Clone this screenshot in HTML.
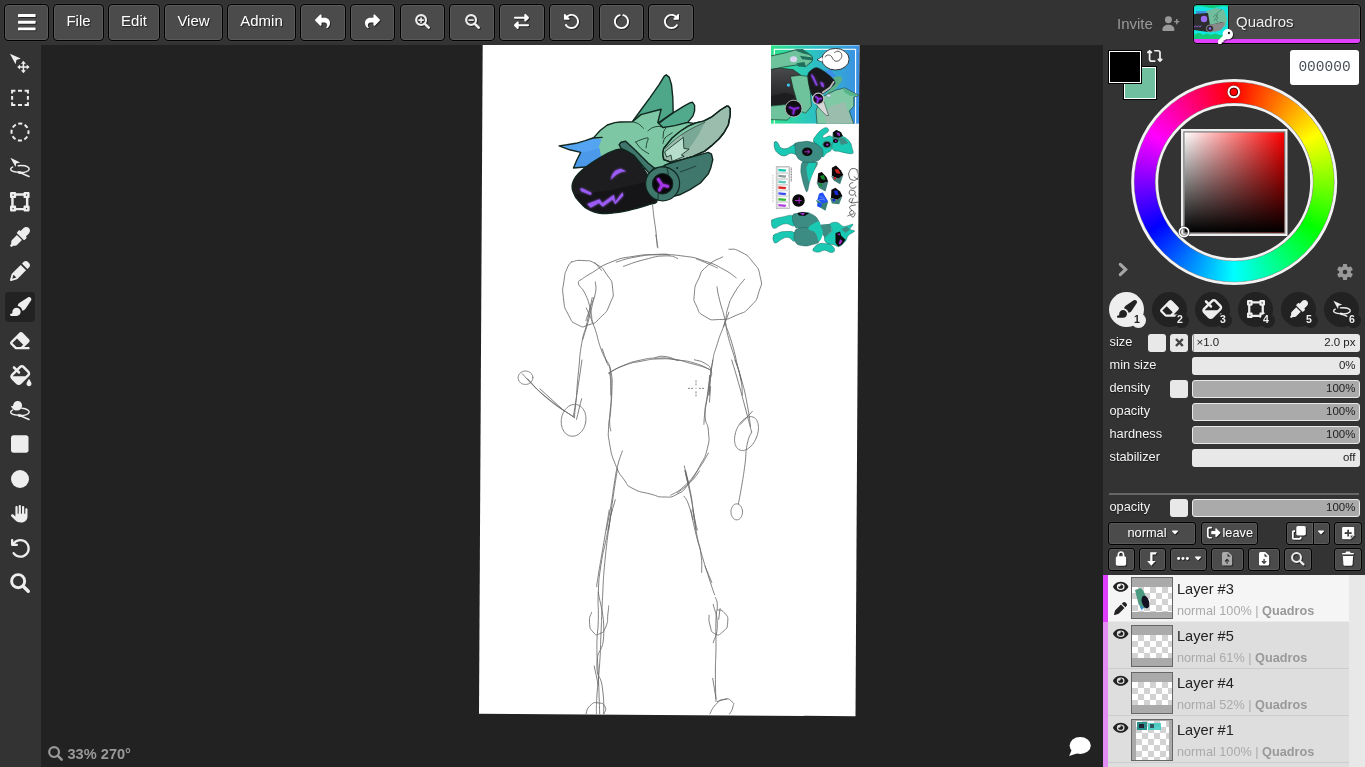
<!DOCTYPE html>
<html><head><meta charset="utf-8"><title>Magma</title>
<style>
html,body{margin:0;padding:0;}
body{width:1365px;height:767px;overflow:hidden;background:#222;position:relative;font-family:"Liberation Sans",sans-serif;font-size:15px;color:#eee;}
#root{position:absolute;left:0;top:0;width:1365px;height:767px;will-change:transform;}
.abs{position:absolute;}
#topbar{position:absolute;left:0;top:0;width:1365px;height:45px;background:#333;}
#left{position:absolute;left:0;top:45px;width:41px;height:722px;background:#333;}
#right{position:absolute;left:1103px;top:45px;width:262px;height:722px;background:#333;}
.btn{position:absolute;box-sizing:border-box;background:#4b4b4b;border:1px solid #000;box-shadow:inset 0 0 0 1px rgba(255,255,255,.08),0 0 0 1px rgba(255,255,255,.03);border-radius:4px;color:#fff;text-align:center;text-shadow:1px 1px 1px rgba(0,0,0,.55);}
.tb{top:4px;height:37px;line-height:31px;font-size:15px;}
svg{display:block;overflow:visible;fill:#eee;}
.slot{position:absolute;top:292px;width:35px;height:35px;border-radius:50%;background:#222;}
.slot.sel{background:#eee;}
.badge{position:absolute;left:22px;top:21px;width:15px;height:15px;border-radius:50%;background:inherit;font-size:10.5px;font-weight:bold;line-height:12px;text-align:center;color:#eee;text-indent:-3px;}
.slot.sel .badge{color:#222;}
.lbl{position:absolute;left:1109.5px;font-size:12.8px;line-height:18px;color:#eee;text-shadow:0 1px 1px rgba(0,0,0,.6);}
.chk{position:absolute;width:18px;height:18px;border-radius:3px;background:#e8e8e8;}
.sld{position:absolute;left:1192px;width:168px;height:18px;border-radius:3px;background:#e8e8e8;box-sizing:border-box;font-size:11.5px;line-height:17px;color:#222;text-align:right;padding-right:4.5px;}
.sld.full{background:#aaa;border:1px solid #e8e8e8;line-height:15px;padding-right:3.5px;}
.lb{position:absolute;box-sizing:border-box;background:#4b4b4b;border:1px solid #000;box-shadow:inset 0 0 0 1px rgba(255,255,255,.08),0 0 0 1px rgba(255,255,255,.03);border-radius:3px;height:22.3px;color:#fff;font-size:12.8px;line-height:19.5px;text-shadow:1px 1px 1px rgba(0,0,0,.55);}
.row{position:absolute;left:1108px;width:241px;height:47px;background:#dedede;box-sizing:border-box;border-bottom:1px solid #ccc;}
.row.act{background:#f5f5f5;border-bottom-color:#eaeaea;}
.stripe{position:absolute;left:1103px;width:5px;height:47px;background:#e38df5;}
.thumb{position:absolute;left:23px;top:2px;width:42px;height:42px;box-sizing:border-box;border:1px solid #666;background:#aaa;overflow:hidden;}
.chk8{background-color:#fff;background-image:linear-gradient(45deg,#d2d2d2 25%,transparent 25%,transparent 75%,#d2d2d2 75%),linear-gradient(45deg,#d2d2d2 25%,transparent 25%,transparent 75%,#d2d2d2 75%);background-size:12px 12px;background-position:0 0,6px 6px;}
.lname{position:absolute;left:69px;top:5px;font-size:14.6px;line-height:18px;color:#222;}
.lsub{position:absolute;left:69px;top:28px;font-size:12.7px;line-height:16px;color:#aaa;white-space:nowrap;}
.lsub b{color:#999;}

.btn svg,.lb svg{fill:#fff;filter:drop-shadow(1px 1px .5px rgba(0,0,0,.5));}
.btn svg[style*="fill:#eee"],.lb svg[style*="fill:#eee"]{fill:#fff !important;}
.lbl{color:#f4f4f4;}

</style></head>
<body><div id="root">
<div id="topbar">
  <div class="btn tb" style="left:4px;width:45px;"><svg class="abs" style="left:12.8px;top:8.6px;width:17.6px;height:16.4px" viewBox="0 0 448 416"><rect x="0" y="0" width="448" height="76" rx="16"/><rect x="0" y="170" width="448" height="76" rx="16"/><rect x="0" y="340" width="448" height="76" rx="16"/></svg></div>
  <div class="btn tb" style="left:53px;width:51px;">File</div>
  <div class="btn tb" style="left:108px;width:52px;">Edit</div>
  <div class="btn tb" style="left:164px;width:59px;">View</div>
  <div class="btn tb" style="left:227px;width:69px;">Admin</div>
  <div class="btn tb" style="left:300px;width:45.6px;"><svg style="position:absolute;left:14.3px;top:9px;width:15px;height:15px;fill:#eee;" viewBox="0 0 512 512"><path d="M204.2 18.4c12 5 19.8 16.6 19.8 29.6v80h112c97.2 0 176 78.8 176 176 0 113.3-81.5 163.9-100.2 174.1-2.5 1.4-5.3 1.9-8.1 1.9-10.9 0-19.7-8.9-19.7-19.7 0-7.5 4.3-14.4 9.8-19.5 9.4-8.8 22.2-26.4 22.2-56.7 0-53-43-96-96-96h-96v80c0 12.9-7.8 24.6-19.8 29.6s-25.7 2.2-34.9-6.9l-160-160c-12.5-12.5-12.5-32.8 0-45.3l160-160c9.2-9.2 22.9-11.9 34.9-6.9z"/></svg></div>
  <div class="btn tb" style="left:349.75px;width:45.6px;"><svg style="position:absolute;left:14.3px;top:9px;width:15px;height:15px;fill:#eee;" viewBox="0 0 512 512"><path d="M307.8 18.4C295.8 23.4 288 35 288 48v80H176C78.8 128 0 206.8 0 304c0 113.3 81.5 163.9 100.2 174.1 2.5 1.4 5.3 1.9 8.1 1.9 10.9 0 19.7-8.9 19.7-19.7 0-7.5-4.3-14.4-9.8-19.5-9.4-8.8-22.2-26.4-22.2-56.7 0-53 43-96 96-96h96v80c0 12.9 7.8 24.6 19.8 29.6s25.7 2.2 34.9-6.9l160-160c12.5-12.5 12.5-32.8 0-45.3l-160-160c-9.2-9.2-22.9-11.9-34.9-6.9z"/></svg></div>
  <div class="btn tb" style="left:399.5px;width:45.6px;"><svg class="abs" style="left:14.3px;top:9px;width:15px;height:15px" viewBox="0 0 15 15"><circle cx="6.1" cy="6.1" r="4.9" fill="none" stroke="#eee" stroke-width="2.2"/><path d="M9.9 9.9 L13.7 13.7" stroke="#eee" stroke-width="2.5" stroke-linecap="round"/><path d="M3.4 6.1 H8.8 M6.1 3.4 V8.8" stroke="#eee" stroke-width="1.6" fill="none"/></svg></div>
  <div class="btn tb" style="left:449.25px;width:45.6px;"><svg class="abs" style="left:14.3px;top:9px;width:15px;height:15px" viewBox="0 0 15 15"><circle cx="6.1" cy="6.1" r="4.9" fill="none" stroke="#eee" stroke-width="2.2"/><path d="M9.9 9.9 L13.7 13.7" stroke="#eee" stroke-width="2.5" stroke-linecap="round"/><path d="M3.4 6.1 H8.8" stroke="#eee" stroke-width="1.6" fill="none"/></svg></div>
  <div class="btn tb" style="left:499px;width:45.6px;"><svg style="position:absolute;left:14.3px;top:9px;width:15px;height:15px;fill:#eee;" viewBox="0 0 512 512"><path d="m502.6 150.6-96 96c-9.2 9.2-22.9 11.9-34.9 6.9S352 236.9 352 224v-64H32c-17.7 0-32-14.3-32-32s14.3-32 32-32h320V32c0-12.9 7.8-24.6 19.8-29.6s25.7-2.2 34.9 6.9l96 96c12.5 12.5 12.5 32.8 0 45.3zm-397.3 352-96-96c-12.5-12.5-12.5-32.8 0-45.3l96-96c9.2-9.2 22.9-11.9 34.9-6.9S160 275.1 160 288v64h320c17.7 0 32 14.3 32 32s-14.3 32-32 32H160v64c0 12.9-7.8 24.6-19.8 29.6s-25.7 2.2-34.9-6.9z"/></svg></div>
  <div class="btn tb" style="left:548.75px;width:45.6px;"><svg style="position:absolute;left:14.3px;top:9px;width:15px;height:15px;fill:#eee;" viewBox="0 0 512 512"><path d="M24 192h144c9.7 0 18.5-5.8 22.2-14.8s1.7-19.3-5.2-26.2l-46.7-46.7c75.3-58.6 184.3-53.3 253.5 15.9 75 75 75 196.5 0 271.5s-196.5 75-271.5 0c-10.2-10.2-19-21.3-26.4-33-9.5-14.9-29.3-19.3-44.2-9.8s-19.3 29.3-9.8 44.2c9.8 15.6 21.5 30.4 35.1 43.9 100 100 262 100 362 0s100-262 0-362C342.8-19.3 193.3-24.7 92.7 58.8L41 7C34.1.2 23.8-1.9 14.8 1.8S0 14.3 0 24v144c0 13.3 10.7 24 24 24"/></svg></div>
  <div class="btn tb" style="left:598.5px;width:45.6px;"><svg style="position:absolute;left:14.3px;top:9px;width:15px;height:15px;fill:#eee;" viewBox="0 0 512 512"><path d="M222.7 32.1c5 16.9-4.6 34.8-21.5 39.8C121.9 95.5 64.1 169 64.1 256c0 106 86 192 192 192s192-86 192-192c0-86.9-57.8-160.4-137.1-184.1-16.9-5-26.6-22.9-21.5-39.8s22.9-26.6 39.8-21.5C434.9 42.1 512 140 512 256c0 141.4-114.6 256-256 256S0 397.4 0 256C0 140 77.1 42.1 182.9 10.6c16.9-5 34.8 4.6 39.8 21.5"/></svg></div>
  <div class="btn tb" style="left:648.25px;width:45.6px;"><svg style="position:absolute;left:14.3px;top:9px;width:15px;height:15px;fill:#eee;" viewBox="0 0 512 512"><path d="M488 192H344c-9.7 0-18.5-5.8-22.2-14.8s-1.7-19.3 5.2-26.2l46.7-46.7C298.4 45.7 189.4 51 120.2 120.2c-75 75-75 196.5 0 271.5s196.5 75 271.5 0q12.3-12.3 21.9-26.1c10.1-14.5 30.1-18 44.6-7.9s18 30.1 7.9 44.6c-8.5 12.2-18.2 23.8-29.1 34.7-100 100-262.1 100-362 0S-25 175 75 75c94.3-94.3 243.7-99.6 344.3-16.2L471 7c6.9-6.9 17.2-8.9 26.2-5.2S512 14.3 512 24v144c0 13.3-10.7 24-24 24"/></svg></div>

  <div class="abs" style="left:1117px;top:14px;font-size:15px;color:#999;line-height:20px;">Invite</div>
  <svg style="position:absolute;left:1160.5px;top:16px;width:18.6px;height:14.9px;fill:#999;" viewBox="0 0 640 512"><path d="M136 128a120 120 0 1 1 240 0 120 120 0 1 1-240 0M48 482.3C48 383.8 127.8 304 226.3 304h59.4c98.5 0 178.3 79.8 178.3 178.3 0 16.4-13.3 29.7-29.7 29.7H77.7C61.3 512 48 498.7 48 482.3M544 96c13.3 0 24 10.7 24 24v48h48c13.3 0 24 10.7 24 24s-10.7 24-24 24h-48v48c0 13.3-10.7 24-24 24s-24-10.7-24-24v-48h-48c-13.3 0-24-10.7-24-24s10.7-24 24-24h48v-48c0-13.3 10.7-24 24-24"/></svg>
  <div class="btn" style="left:1193px;top:4px;width:168px;height:40px;overflow:visible;">
    <div class="abs" style="left:0;top:0;width:166px;height:38px;border-radius:3px;overflow:hidden;">
      <svg class="abs" style="left:0;top:0;width:34px;height:34px" viewBox="0 0 34 34">
        <rect width="34" height="34" fill="#12e6e0"/>
        <path d="M0 2 Q6 0 12 2 T24 2 T34 2 V0 H0Z" fill="#13c97a"/>
        <path d="M0 34 V30 Q5 26 9 30 Q13 27 17 30 Q21 27 25 30 L34 30 V34Z" fill="#13c97a"/>
        <path d="M12 6 L22 3 L30 5 L33 14 L31 22 L14 22Z" fill="#72bd9d"/>
        <path d="M2 6 L12 6 L13 9 L2 9Z" fill="#3d8fe0"/>
        <path d="M0 9 L14 8 L16 20 L28 17 L30 19 L26 24 L14 27 L0 25Z" fill="#2c2c2e"/>
        <path d="M15 20 L30 17 L31 19 L27 25 L20 27Z" fill="#8a8a8a"/>
        <circle cx="10" cy="14" r="3.2" fill="#9a6cf0"/>
        <circle cx="16" cy="23.5" r="3.6" fill="#2c2c2e" stroke="#8a8a8a" stroke-width="1"/>
        <circle cx="16" cy="23.5" r="1.3" fill="#9a6cf0"/>
        <path d="M0 22 l1.5 -1 l1.5 1.2 l1.5 -1.4 l1.5 1.2 l1.5 -1.6" stroke="#9a6cf0" stroke-width=".8" fill="none"/>
        <path d="M19 12 L28 4 M20 16 L24 9 M22 10 l2 3 l-2 2 l2 2" stroke="#3f7d66" stroke-width=".7" fill="none"/>
      </svg>
      <div class="abs" style="left:0;top:34px;width:166px;height:4px;background:#e040fb;"></div>
    </div>
    <div class="abs" style="left:42px;top:8px;font-size:15px;line-height:18px;color:#eee;">Quadros</div>
    <svg style="position:absolute;left:24px;top:23.5px;width:15px;height:15px;fill:#fff;transform" viewBox="0 0 512 512" preserveAspectRatio="none"><path d="M336 352c97.2 0 176-78.8 176-176S433.2 0 336 0 160 78.8 160 176c0 18.7 2.9 36.8 8.3 53.7L7 391c-4.5 4.5-7 10.6-7 17v80c0 13.3 10.7 24 24 24h80c13.3 0 24-10.7 24-24v-40h40c13.3 0 24-10.7 24-24v-40h40c6.4 0 12.5-2.5 17-7l33.3-33.3c16.9 5.4 35 8.3 53.7 8.3m40-256a40 40 0 1 1 0 80 40 40 0 1 1 0-80"/></svg>
  </div>
</div>

<div id="left">
  <div class="abs" style="left:5px;top:247px;width:30px;height:30px;border-radius:4px;background:#222;"></div>
</div>
<!-- left tool icons: coordinates absolute to page -->
<!-- move -->
<svg class="abs" style="left:10px;top:54px;width:20px;height:20px" viewBox="0 0 20 20">
  <path d="M-0.1 -0.2 L10.8 4.6 L6.4 5.9 L5.6 10.2Z"/>
  <path d="M13.40 6.80 L15.90 9.70 L14.20 9.70 L14.20 12.20 L16.70 12.20 L16.70 10.50 L19.60 13.00 L16.70 15.50 L16.70 13.80 L14.20 13.80 L14.20 16.30 L15.90 16.30 L13.40 19.20 L10.90 16.30 L12.60 16.30 L12.60 13.80 L10.10 13.80 L10.10 15.50 L7.20 13.00 L10.10 10.50 L10.10 12.20 L12.60 12.20 L12.60 9.70 L10.90 9.70Z"/>
</svg>
<!-- rect select -->
<svg class="abs" style="left:0;top:0;width:41px;height:120px" viewBox="0 0 41 120"><path d="M11.10 90.70 H15.40 M18.00 90.70 H22.00 M24.60 90.70 H28.90 M11.10 105.10 H15.40 M18.00 105.10 H22.00 M24.60 105.10 H28.90 M12.10 89.70 V93.60 M12.10 96.10 V99.70 M12.10 102.20 V106.10 M27.90 89.70 V93.60 M27.90 96.10 V99.70 M27.90 102.20 V106.10" fill="none" stroke="#eee" stroke-width="2"/></svg>
<!-- ellipse select -->
<svg class="abs" style="left:10px;top:122.45px;width:20px;height:20px" viewBox="0 0 20 20">
  <circle cx="10" cy="10" r="8.5" fill="none" stroke="#eee" stroke-width="2" stroke-dasharray="4.1 2.576" stroke-dashoffset="2.05"/>
</svg>
<!-- lasso select -->
<svg class="abs" style="left:10px;top:157px;width:20px;height:20px" viewBox="0 0 20 20">
  <path d="M0.4 0.8 L10.2 5.4 L6.1 6.4 L5.6 9.9Z"/>
  <path d="M8.2 8.7 C13 8.4 16 8.8 17.6 9.9 C20 11.4 19.6 13.4 16.5 14.6 C14 15.5 11.5 15.6 9.5 15.4 C6.5 15.2 3.6 14.9 1.9 13.9 C0 12.8 0.4 10.9 2.6 10.1" fill="none" stroke="#eee" stroke-width="1.5" stroke-linecap="round"/>
  <path d="M7.6 14 L11.4 14.4 L10.6 17 L8.4 16.8Z"/>
  <path d="M9.8 15.6 L19 19.5" stroke="#eee" stroke-width="1.6" stroke-linecap="round"/>
</svg>
<!-- transform -->
<svg class="abs" style="left:10.3px;top:191.5px;width:19.6px;height:19.6px" viewBox="0 0 512 512">
  <path fill-rule="evenodd" d="M512 128V32c0-17.67-14.33-32-32-32h-96c-17.67 0-32 14.33-32 32H160c0-17.67-14.33-32-32-32H32C14.33 0 0 14.33 0 32v96c0 17.67 14.33 32 32 32v192c-17.67 0-32 14.33-32 32v96c0 17.670 14.33 32 32 32h96c17.67 0 32-14.33 32-32h192c0 17.670 14.33 32 32 32h96c17.67 0 32-14.33 32-32v-96c0-17.670-14.33-32-32-32V160c17.670 0 32-14.33 32-32zm-96-64h32v32h-32V64zM64 64h32v32H64V64zm32 384H64v-32h32v32zm352 0h-32v-32h32v32zm-32-96h-32c-17.670 0-32 14.33-32 32v32H160v-32c0-17.670-14.33-32-32-32H96V160h32c17.670 0 32-14.33 32-32V96h192v32c0 17.670 14.330 32 32 32h32v192z"/>
</svg>
<svg class="abs" style="left:10px;top:226.5px;width:20px;height:20px" viewBox="0 0 512 512"><path d="M50.75 333.25c-12 12-18.75 28.28-18.75 45.260V424L0 480l32 32 56-32h45.490c16.970 0 33.250-6.740 45.250-18.740l126.640-126.620-128-128L50.750 333.250zM483.880 28.120c-37.470-37.500-98.280-37.500-135.750 0l-77.090 77.090-13.100-13.100c-9.440-9.440-24.650-9.310-33.940 0l-40.970 40.970c-9.370 9.370-9.370 24.570 0 33.940l161.940 161.940c9.440 9.440 24.650 9.310 33.940 0L419.880 288c9.370-9.370 9.370-24.570 0-33.940l-13.100-13.100 77.090-77.090c37.500-37.480 37.500-98.260.010-135.750z"/></svg>
<svg style="position:absolute;left:10px;top:261px;width:20px;height:20px;fill:#eee;" viewBox="0 0 512 512"><path d="M36.4 353.2c4.1-14.6 11.8-27.9 22.6-38.7l181.2-181.2 33.9-33.9 104 104 33.9 33.9-33.9 33.9-181.2 181.2c-10.7 10.7-24.1 18.5-38.7 22.6L30.4 510.6c-8.3 2.3-17.3 0-23.4-6.2S-1.4 489.3.9 481zm55.6-3.7c-4.4 4.7-7.6 10.4-9.3 16.6L58.6 453l86.9-24.1c6.4-1.8 12.2-5.1 17-9.7l-70.6-69.7zm354-146.1-104-104-34-33.9 44.9-44.9C366.4 7 384.8-.6 404-.6s37.6 7.6 51.1 21.2l35.7 35.7c13.6 13.6 21.2 32 21.2 51.1s-7.6 37.6-21.2 51.1l-44.9 44.9z"/></svg>
<svg style="position:absolute;left:9.5px;top:296.5px;width:21.4px;height:19px;fill:#eee;" viewBox="0 0 576 512"><path d="M480.5 10.3 259.1 158c-29.1 19.4-47.6 50.9-50.6 85.3 62.3 12.8 111.4 61.9 124.3 124.3 34.5-3 65.9-21.5 85.3-50.6L565.7 95.5c6.7-10.1 10.3-21.9 10.3-34.1C576 27.5 548.5 0 514.6 0c-12.1 0-24 3.6-34.1 10.3M288 400c0-61.9-50.1-112-112-112S64 338.1 64 400c0 3.9.2 7.8.6 11.6 1.8 17.5-10.2 36.4-27.8 36.4H32c-17.7 0-32 14.3-32 32s14.3 32 32 32h144c61.9 0 112-50.1 112-112"/></svg>
<svg style="position:absolute;left:9.6px;top:331.5px;width:20.8px;height:18.5px;fill:#eee;" viewBox="0 0 576 512"><path d="M178.5 416h123l65.3-65.3-173.5-173.5L66.6 303.9l112 112zm45.5 64h-45.5c-17 0-33.3-6.7-45.3-18.7L17 345C6.1 334.1 0 319.4 0 304s6.1-30.1 17-41L263 17c10.9-10.9 25.6-17 41-17s30.1 6.1 41 17l182 182c10.9 10.9 17 25.6 17 41s-6.1 30.1-17 41L392 416h120c17.7 0 32 14.3 32 32s-14.3 32-32 32z"/></svg>
<svg style="position:absolute;left:8.8px;top:365px;width:22.5px;height:20px;fill:#eee;" viewBox="0 0 576 512"><path d="M309.7 71.6 245.3 136l33.4 33.4c12.5 12.5 12.5 32.8 0 45.3s-32.8 12.5-45.3 0L200 181.3l-96.4 96.4c-2.9 2.9-5.1 6.5-6.3 10.3h321.5l53.7-53.7c4.9-4.9 7.6-11.5 7.6-18.3s-2.7-13.5-7.6-18.3L346.3 71.6c-4.8-4.9-11.4-7.6-18.3-7.6s-13.5 2.7-18.3 7.6M58.3 232.4l96.4-96.4-49.4-49.4c-12.5-12.5-12.5-32.8 0-45.3s32.8-12.5 45.3 0L200 90.7l64.4-64.4C281.3 9.5 304.1 0 328 0s46.7 9.5 63.6 26.3l126.1 126.1c16.8 16.9 26.3 39.7 26.3 63.6s-9.5 46.7-26.3 63.6L311.6 485.7C294.7 502.5 271.9 512 248 512s-46.7-9.5-63.6-26.3L58.3 359.6C41.5 342.7 32 319.9 32 296s9.5-46.7 26.3-63.6M512 544c-35.3 0-64-28.7-64-64 0-25.2 32.6-79.6 51.2-108.7 6-9.4 19.5-9.4 25.5 0 18.7 29.1 51.2 83.5 51.2 108.7 0 35.3-28.7 64-64 64z"/></svg>
<!-- lasso fill -->
<svg class="abs" style="left:10px;top:399.5px;width:20px;height:20px" viewBox="0 0 20 20">
  <path d="M7.6 1 C10.6 1 12.2 3.2 12 6 C11.8 8.8 9.8 10.6 7 10.6 C4.6 10.6 3.4 9.4 2.4 8.4 C1.6 7.7 1.1 6.9 0.8 5.8 C1.6 6.4 2.6 6.4 3.1 5.6 C3.4 2.8 5.2 1 7.6 1Z"/>
  <path d="M11.9 8.3 C13 8.4 16 8.8 17.6 9.9 C20 11.4 19.6 13.4 16.5 14.6 C14 15.5 11.5 15.6 9.5 15.4 C6.5 15.2 3.6 14.9 1.9 13.9 C0 12.8 0.4 10.9 2.6 10.1" fill="none" stroke="#eee" stroke-width="1.5" stroke-linecap="round"/>
  <path d="M7.6 14 L11.4 14.4 L10.6 17 L8.4 16.8Z"/>
  <path d="M9.8 15.6 L19 19.5" stroke="#eee" stroke-width="1.6" stroke-linecap="round"/>
</svg>
<svg style="position:absolute;left:11.2px;top:434.2px;width:17.5px;height:20px;fill:#eee;" viewBox="0 0 448 512"><path d="M64 32h320c35.3 0 64 28.7 64 64v320c0 35.3-28.7 64-64 64H64c-35.3 0-64-28.7-64-64V96c0-35.3 28.7-64 64-64"/></svg>
<svg style="position:absolute;left:11px;top:470px;width:18px;height:18px;fill:#eee;" viewBox="0 0 512 512"><path d="M0 256a256 256 0 1 1 512 0 256 256 0 1 1-512 0"/></svg>
<svg style="position:absolute;left:11.2px;top:503.8px;width:17.6px;height:19.4px;fill:#eee;" viewBox="0 0 512 512"><path d="M288 32c0-17.7-14.3-32-32-32s-32 14.3-32 32v208c0 8.8-7.2 16-16 16s-16-7.2-16-16V64c0-17.7-14.3-32-32-32s-32 14.3-32 32v272c0 1.5 0 3.1.1 4.6L67.6 283c-16-15.2-41.3-14.6-56.6 1.4s-14.6 41.3 1.4 56.6l112.4 107c43.1 41.1 100.4 64 160 64H304c97.2 0 176-78.8 176-176V128c0-17.7-14.3-32-32-32s-32 14.3-32 32v112c0 8.8-7.2 16-16 16s-16-7.2-16-16V64c0-17.7-14.3-32-32-32s-32 14.3-32 32v176c0 8.8-7.2 16-16 16s-16-7.2-16-16z"/></svg>
<svg style="position:absolute;left:10.6px;top:538.6px;width:18.8px;height:18.8px;fill:#eee;" viewBox="0 0 512 512"><path d="M256 64c-56.8 0-107.9 24.7-143.1 64H160c17.7 0 32 14.3 32 32s-14.3 32-32 32H32c-17.7 0-32-14.3-32-32V32C0 14.3 14.3 0 32 0s32 14.3 32 32v54.7C110.9 33.6 179.5 0 256 0c141.4 0 256 114.6 256 256S397.4 512 256 512c-87 0-163.9-43.4-210.1-109.7-10.1-14.5-6.6-34.4 7.9-44.6s34.4-6.6 44.6 7.9c34.8 49.8 92.4 82.3 157.6 82.3 106 0 192-86 192-192S362 64 256 64"/></svg>
<svg class="abs" style="left:10px;top:572.5px;width:20px;height:20px" viewBox="0 0 15 15"><circle cx="6.1" cy="6.1" r="4.9" fill="none" stroke="#eee" stroke-width="2.2"/><path d="M9.9 9.9 L13.7 13.7" stroke="#eee" stroke-width="2.5" stroke-linecap="round"/></svg>
<!-- status -->
<svg class="abs" style="left:48px;top:746px;width:15px;height:15px" viewBox="0 0 15 15"><circle cx="6.1" cy="6.1" r="4.9" fill="none" stroke="#999" stroke-width="2.2"/><path d="M9.9 9.9 L13.7 13.7" stroke="#999" stroke-width="2.5" stroke-linecap="round"/></svg>
<div class="abs" style="left:67.5px;top:745px;font-size:14.6px;font-weight:bold;color:#999;line-height:18px;">33% 270°</div>
<svg class="abs" style="left:1068px;top:735px;width:24px;height:22px;fill:#fff" viewBox="1068 735 24 22"><ellipse cx="1080.2" cy="745.4" rx="10.6" ry="8.5"/><path d="M1071.8 749.5 L1069.2 756 L1077.5 753.2Z"/></svg>

<svg class="abs" style="left:41px;top:45px;width:1062px;height:722px;overflow:hidden" viewBox="41 45 1062 722">
  <defs>
    <filter id="glow" x="-50%" y="-50%" width="200%" height="200%"><feGaussianBlur stdDeviation="1.2" result="b"/><feMerge><feMergeNode in="b"/><feMergeNode in="SourceGraphic"/></feMerge></filter>
  </defs>
  <clipPath id="cv"><polygon points="482.7,43 859.4,43 855.5,716.2 479,713.8"/></clipPath>
  <polygon points="482.7,43 859.4,43 855.5,716.2 479,713.8" fill="#fff"/>
  <g clip-path="url(#cv)">
  <defs><linearGradient id="r1g" x1="0" x2="1" y1="0" y2="0"><stop offset="0" stop-color="#2fe48c"/><stop offset=".45" stop-color="#2cc4c0"/><stop offset="1" stop-color="#3b8fe6"/></linearGradient><linearGradient id="arm" x1="0" x2="0" y1="0" y2="1"><stop offset="0" stop-color="#4a4a4c"/><stop offset="1" stop-color="#1c1c1e"/></linearGradient><clipPath id="r1c"><rect x="771" y="45.4" width="88.6" height="78.3"/></clipPath></defs>
<rect x="771" y="45.4" width="88.6" height="78.3" fill="url(#r1g)"/>
<g clip-path="url(#r1c)">
<rect x="774.3" y="49.3" width="81.3" height="75" fill="none" stroke="#fff" stroke-width="1.1"/>
<path d="M768.9 56.4 L785.0 52.9 L796.4 49.5 L803.3 50.0 L812.5 56.9 L812.5 60.9 L805.6 66.7 L796.4 65.0 L785.0 66.7 L768.9 70.1 Z" fill="#6ec29c" stroke="#173027" stroke-width="0.7" stroke-linejoin="round" stroke-linecap="round" />
<path d="M795.3 50.6 L802.2 48.9 L812.5 55.8 L803.3 53.5 Z" fill="#1f6e5c"  />
<path d="M799.9 55.8 L812.5 57.5 L813.1 60.4 L802.2 59.2 Z" fill="#1f6e5c"  />
<path d="M796.4 63.2 L804.5 62.1 L805.6 66.1 L798.7 66.7 Z" fill="#1f6e5c"  />
<ellipse cx="793.6" cy="59.2" rx="3.6" ry="3" fill="#dcd6f2"/>
<path d="M768.9 69.6 L780.4 68.2 L793.0 69.6 L801.0 75.3 L796.4 79.9 L791.9 79.9 L795.3 90.2 L796.4 99.4 L785.0 104.6 L768.9 105.7 Z" fill="url(#arm)" stroke="#173027" stroke-width="0.7" stroke-linejoin="round" stroke-linecap="round" />
<path d="M768.9 97.1 L785.0 92.5 L795.3 96.0 L785.0 104.6 L768.9 105.7 Z" fill="#1d1d1f"  />
<circle cx="788.4" cy="85.1" r="1.6" fill="#3cc8f4"/>
<path d="M790.7 76.4 L799.9 75.3 L807.9 76.4 L810.2 90.2 L811.4 106.3 L805.6 113.2 L799.9 110.9 L796.4 99.4 L793.0 87.9 Z" fill="#6ec29c" stroke="#173027" stroke-width="0.6" stroke-linejoin="round" stroke-linecap="round" />
<path d="M768.9 106.3 L785.0 104.6 L791.9 115.5 L787.3 120.1 L768.9 119.5 Z" fill="#6ec29c" stroke="#173027" stroke-width="0.6" stroke-linejoin="round" stroke-linecap="round" />
<path d="M826.3 96.0 L835.5 89.1 L842.4 79.9 L841.2 76.4 L833.2 76.4 L835.5 83.3 L826.3 93.7 Z" fill="#5cb088"  />
<path d="M824.0 96.0 L835.5 90.2 L844.7 87.9 L859.0 95.4 L853.8 97.1 L853.8 106.3 L849.3 110.9 L853.8 124.1 L817.1 124.1 L816.0 110.9 L819.4 101.7 Z" fill="#7fcaa5" stroke="#173027" stroke-width="0.6" stroke-linejoin="round" stroke-linecap="round" />
<path d="M830.9 106.3 L844.7 101.7 L852.7 123.5 L826.3 124.1 L824.0 113.2 Z" fill="#9abdae"  />
<path d="M842.4 87.9 L859.0 95.4 L850.4 96.0 L844.7 92.5 Z" fill="#55b48a"  />
<path d="M824.0 68.4 L827.4 71.3 L830.9 67.8 L833.2 73.0 L836.6 76.4 L832.0 77.6 L826.3 75.3 Z" fill="#3b8fe6"  />
<path d="M807.9 75.3 C808.2 72.3 809.8 71.4 811.4 70.1 C812.9 68.9 814.6 67.4 817.1 67.8 C819.6 68.3 823.3 70.7 826.3 73.0 C829.3 75.3 834.1 79.1 834.9 81.6 C835.7 84.1 832.9 85.9 830.9 87.9 C828.9 89.9 825.7 92.2 822.8 93.7 C820.0 95.1 815.9 97.5 813.7 96.5 C811.5 95.6 810.6 91.5 809.6 87.9 C808.7 84.4 807.6 78.3 807.9 75.3 Z" fill="#19191b" stroke="#173027" stroke-width="0.7" stroke-linejoin="round" stroke-linecap="round" />
<path d="M834.9 81.6 L830.9 87.9 L822.8 93.7 L821.7 91.9 L829.2 87.0 L833.4 80.8 Z" fill="#b9b9b9"  />
<g filter="url(#glow)">
<path d="M811.4 73.6 L813.7 76.4 L816.0 81.6 L817.7 85.6 L816.0 85.4 L813.7 80.5 L811.6 76.4 Z" fill="#8b44e8"  />
<path d="M820.0 81.6 L823.4 83.3 L824.0 87.4 L821.7 86.2 Z" fill="#8b44e8"  />
</g>
<path d="M816.0 104.0 L824.0 101.7 L828.6 115.5 L826.3 115.5 L821.7 110.9 Z" fill="#d8d8d8" stroke="#173027" stroke-width="0.5" stroke-linejoin="round" stroke-linecap="round" />
<circle cx="818.3" cy="98.8" r="5.6" fill="#0c0c0e" stroke="#c8c8c8" stroke-width="1.3"/>
<path d="M818.3 98.8 l-2.6 -2.2 M818.3 98.8 l3.2 -.4 M818.3 98.8 l-1 3.4" stroke="#9a30e8" stroke-width="1.5" stroke-linecap="round" filter="url(#glow)"/>
<ellipse cx="828.8" cy="95.7" rx="2.2" ry="1.4" fill="#cfe6ff" stroke="#888" stroke-width=".4"/>
<circle cx="793.6" cy="108.6" r="8.4" fill="#0e0e10" stroke="#bbb" stroke-width=".9"/>
<path d="M794.1 108.9 l-4.6 -1.6 M794.1 108.9 l4.6 -1.2 M794.1 108.9 l-.8 5" stroke="#8a2be2" stroke-width="1.6" stroke-linecap="round" filter="url(#glow)"/>
<path d="M822.3 56.7 L817.0 59.8 L822.5 62.0" fill="#fff" stroke="#222" stroke-width=".8"/>
<ellipse cx="835.5" cy="59.2" rx="13.6" ry="10.8" fill="#fff" stroke="#222" stroke-width=".9"/>
<path d="M822.3 57.0 L817.9 59.8 L822.5 61.7Z" fill="#fff"/>
<path d="M825.0 56.7 c3 -3 6 -2 7.5 1.5 c1.5 3.5 5 4 7.5 1.5 c2.5 -2.5 2.5 -6.5 -.5 -8 c-2 -1 -4 -.5 -5 1" fill="none" stroke="#333" stroke-width=".8" stroke-linecap="round"/>
</g>
<path d="M774.4 142.7 C774.8 141.1 775.6 141.3 776.7 141.8 C777.7 142.3 778.0 143.6 779.0 145.0 C779.9 146.4 779.1 146.9 780.8 147.7 C782.5 148.6 783.7 149.1 786.3 148.6 C788.8 148.2 789.2 147.1 791.7 145.9 C794.3 144.7 795.7 141.7 797.2 143.6 C798.7 145.5 799.6 151.9 798.1 154.1 C796.6 156.4 794.0 152.8 790.8 153.2 C787.6 153.6 787.4 155.9 784.4 155.9 C781.4 155.9 780.3 154.9 778.0 153.2 C775.8 151.5 775.7 151.1 774.8 148.6 C774.0 146.2 774.0 144.3 774.4 142.7 Z" fill="#19c9b3" stroke="#145850" stroke-width="0.5" stroke-linejoin="round" stroke-linecap="round" />
<path d="M803.6 161.4 C806.5 160.1 812.7 161.3 815.5 161.9 C818.2 162.4 817.6 162.2 817.3 164.2 C816.9 166.1 815.1 168.2 813.6 171.5 C812.2 174.7 811.3 176.6 810.0 180.6 C808.7 184.6 808.3 190.3 807.2 191.5 C806.1 192.8 805.6 189.9 804.5 187.0 C803.4 184.1 802.5 180.6 801.8 176.9 C801.0 173.3 800.5 171.8 800.9 168.7 C801.2 165.6 800.7 162.8 803.6 161.4 Z" fill="#3d8c84" stroke="#145850" stroke-width="0.4" stroke-linejoin="round" stroke-linecap="round" />
<path d="M809.1 162.3 L816.4 163.2 L813.6 171.5 L809.1 182.4 L807.2 175.1 L806.3 167.8 Z" fill="#19c9b3"  />
<path d="M813.6 141.3 C813.1 138.1 814.7 137.3 816.4 135.0 C818.0 132.6 819.8 130.9 821.8 129.5 C823.9 128.0 825.0 127.5 826.4 127.7 C827.8 127.8 828.7 129.3 828.7 130.4 C828.7 131.5 827.6 132.0 826.4 133.1 C825.2 134.2 823.1 135.0 822.8 135.9 C822.4 136.8 823.1 137.7 824.6 137.7 C826.0 137.7 828.2 135.5 830.1 135.9 C831.9 136.2 833.3 137.7 833.7 139.5 C834.1 141.3 832.4 142.8 831.9 145.0 C831.3 147.2 832.1 148.8 831.0 150.5 C829.9 152.1 828.1 151.9 826.4 153.2 C824.8 154.5 824.2 157.2 822.8 156.9 C821.3 156.5 820.9 154.5 819.1 151.4 C817.3 148.3 814.2 144.6 813.6 141.3 Z" fill="#19c9b3" stroke="#145850" stroke-width="0.4" stroke-linejoin="round" stroke-linecap="round" />
<path d="M837.4 137.7 C839.7 136.0 841.2 135.9 843.8 136.8 C846.3 137.7 848.5 140.1 850.1 142.3 C851.8 144.4 851.4 145.5 852.0 147.7 C852.5 149.9 854.0 152.1 852.9 153.2 C851.8 154.3 849.2 153.6 846.5 153.2 C843.8 152.8 841.7 151.9 839.2 151.4 C836.6 150.8 835.2 151.7 833.7 150.5 C832.3 149.2 831.2 147.5 831.9 145.0 C832.6 142.4 835.0 139.3 837.4 137.7 Z" fill="#19c9b3" stroke="#145850" stroke-width="0.4" stroke-linejoin="round" stroke-linecap="round" />
<path d="M838.3 138.6 L843.8 137.7 L848.3 143.2 L841.0 145.0 Z" fill="#3d8c84"  />
<path d="M795.4 144.1 C797.6 142.0 797.8 142.3 802.7 141.8 C807.6 141.2 806.9 141.0 811.8 142.3 C816.7 143.5 815.8 143.2 819.1 145.9 C822.4 148.6 822.2 147.8 822.8 151.4 C823.3 154.9 823.1 154.8 820.9 157.8 C818.7 160.8 819.3 160.1 815.5 161.4 C811.6 162.8 812.5 162.6 808.2 162.3 C803.8 162.1 804.4 162.7 800.9 160.5 C797.3 158.3 797.9 158.6 796.3 155.0 C794.6 151.5 795.7 151.9 795.4 148.6 C795.1 145.4 793.2 146.1 795.4 144.1 Z" fill="#3d8c84" stroke="#145850" stroke-width="0.5" stroke-linejoin="round" stroke-linecap="round" />
<ellipse cx="807.2" cy="151.8" rx="5.2" ry="4.2" fill="#0b0b0d"/>
<path d="M804.5 151.8 h5 m-2 -1.8 l2.2 1.8 l-2.2 1.8" stroke="#b030d8" stroke-width=".9" fill="none"/>
<ellipse cx="826.9" cy="144.5" rx="4.6" ry="3.9" fill="#3d8c84"/>
<ellipse cx="826.9" cy="144.5" rx="3.4" ry="2.8" fill="#0b0b0d"/>
<circle cx="827.3" cy="144.6" r="1.2" fill="#a030d0"/>
<path d="M832.8 132.7 L836.4 129.9 L841.0 132.2 L843.0 136.0 L841.0 138.6 L837.4 142.3 L833.3 141.3 L832.3 136.8 Z" fill="#3d8c84"  />
<path d="M832.8 132.4 L836.4 129.9 L841.0 132.2 L842.8 135.9 L838.3 137.7 L833.7 136.8 Z" fill="#0b0b0d"  />
<path d="M836.4 132.2 L839.6 133.1 L840.1 135.9 L837.8 135.4 Z" fill="#a030d0"  />
<ellipse cx="835.5" cy="140.9" rx="2.6" ry="2" fill="#0b0b0d"/>
<circle cx="835.7" cy="140.9" r=".9" fill="#a030d0"/>
<rect x="776.2" y="166.7" width="13.1" height="42.0" fill="#fff" stroke="#999" stroke-width=".6"/>
<rect x="777.3" y="167.6" width="10.9" height="4.9" fill="#fff" stroke="#aaa" stroke-width=".4"/>
<path d="M778.4 168.8 l8 .8 l-1 2.2 l-7 -.6z" fill="#19c9b3"/>
<rect x="777.3" y="173.5" width="10.9" height="4.9" fill="#fff" stroke="#aaa" stroke-width=".4"/>
<path d="M778.4 174.7 l8 .8 l-1 2.2 l-7 -.6z" fill="#8a9a98"/>
<rect x="777.3" y="179.3" width="10.9" height="4.9" fill="#fff" stroke="#aaa" stroke-width=".4"/>
<path d="M778.4 180.5 l8 .8 l-1 2.2 l-7 -.6z" fill="#5fc7bb"/>
<rect x="777.3" y="185.1" width="10.9" height="4.9" fill="#fff" stroke="#aaa" stroke-width=".4"/>
<path d="M778.4 186.3 l8 .8 l-1 2.2 l-7 -.6z" fill="#e02828"/>
<rect x="777.3" y="191.0" width="10.9" height="4.9" fill="#fff" stroke="#aaa" stroke-width=".4"/>
<path d="M778.4 192.2 l8 .8 l-1 2.2 l-7 -.6z" fill="#3a4cf0"/>
<rect x="777.3" y="196.8" width="10.9" height="4.9" fill="#fff" stroke="#aaa" stroke-width=".4"/>
<path d="M778.4 198.0 l8 .8 l-1 2.2 l-7 -.6z" fill="#38b838"/>
<rect x="777.3" y="202.7" width="10.9" height="4.9" fill="#fff" stroke="#aaa" stroke-width=".4"/>
<path d="M778.4 203.9 l8 .8 l-1 2.2 l-7 -.6z" fill="#b040e0"/>
<path d="M772.9 174.9 v28" stroke="#999" stroke-width=".6" stroke-dasharray="1.5 1"/>
<path d="M791.2 167.6 v14" stroke="#555" stroke-width="1" stroke-dasharray="1 .6"/>
<circle cx="798.5" cy="200.5" r="6.2" fill="#08080a"/>
<path d="M795.1 200.5 h6.4 M799.1 197.5 v6" stroke="#c030e0" stroke-width=".9" fill="none"/>
<path d="M816.4 182.4 L822.8 183.3 L828.2 181.5 L825.5 191.5 L819.1 187.9 Z" fill="#3d8078"  /><path d="M818.2 173.3 L821.8 171.9 L826.4 176.9 L828.2 181.5 L822.8 183.3 L817.3 182.4 Z" fill="#0a0a0c"  /><path d="M820.0 176.0 L823.7 175.1 L825.5 179.7 L821.8 179.2 Z" fill="#14902a"  /><path d="M819.1 183.8 L821.8 183.3 L822.3 186.1 L820.0 186.5 Z" fill="#14902a"  />
<path d="M831.0 176.0 L838.3 178.8 L843.3 175.1 L840.1 184.2 L833.7 180.6 Z" fill="#3d8078"  /><path d="M831.9 167.8 L836.0 165.5 L841.0 170.5 L843.3 175.1 L838.3 178.8 L831.9 176.0 Z" fill="#0a0a0c"  /><path d="M834.6 169.6 L838.3 169.2 L840.6 173.7 L836.4 173.3 Z" fill="#d02020"  /><path d="M833.3 177.4 L836.0 176.9 L836.0 179.2 L833.7 179.5 Z" fill="#d02020"  />
<path d="M830.1 197.9 L837.4 199.8 L842.4 196.1 L839.2 204.3 L831.9 203.4 Z" fill="#3d8078"  /><path d="M831.4 189.7 L835.5 187.7 L840.1 191.5 L842.4 196.1 L837.4 199.8 L831.0 197.9 Z" fill="#0a0a0c"  /><path d="M833.7 191.1 L837.4 190.6 L838.7 195.2 L835.1 194.7 Z" fill="#1828d8"  /><path d="M832.3 199.3 L835.1 198.8 L835.1 201.1 L833.0 201.4 Z" fill="#1828d8"  />
<path d="M815.9 199.8 L821.8 202.5 L828.2 201.6 L825.5 210.7 L819.1 207.1 Z" fill="#3d8078"  />
<path d="M817.3 199.8 L819.1 193.4 L822.8 192.4 L828.2 201.6 L822.8 203.4 Z" fill="#2050f4"  />
<ellipse cx="819.6" cy="205.0" rx="2.6" ry="2.2" fill="#2050f4"/>
<path d="M819.6 197.0 q3 -1 5 2 M819.1 199.8 q3 -1.5 6 .5" stroke="#a8c0ff" stroke-width=".5" fill="none"/>
<path d="M857.8 170.4 C856.4 169.8 855.7 168.3 853.2 168.5 C850.8 168.8 850.8 168.8 849.6 171.3 C848.4 173.7 848.4 174.1 849.2 176.7 C850.0 179.4 850.0 179.4 852.3 180.0 C854.6 180.7 855.1 180.5 856.9 178.9 C858.7 177.4 858.4 177.3 858.4 174.9 C858.4 172.5 857.3 172.1 856.9 170.9" fill="none" stroke="#222" stroke-width="0.7" stroke-linejoin="round" stroke-linecap="round" />
<path d="M854.2 176.7 C855.5 177.6 856.5 179.5 858.7 179.5 C860.9 179.5 860.6 177.6 861.5 176.7" fill="none" stroke="#222" stroke-width="0.7" stroke-linejoin="round" stroke-linecap="round" />
<path d="M852.9 182.6 C852.0 183.0 850.7 182.6 850.0 184.0 C849.2 185.5 849.2 186.1 850.5 187.3 C851.8 188.5 852.5 188.4 854.2 188.1 C855.8 187.7 855.4 186.8 856.0 186.2" fill="none" stroke="#222" stroke-width="0.7" stroke-linejoin="round" stroke-linecap="round" />
<path d="M850.5 189.9 C850.1 190.8 849.1 191.3 849.2 192.8 C849.4 194.3 849.6 194.6 851.1 195.0 C852.5 195.4 853.1 195.4 854.2 194.3 C855.2 193.2 855.5 192.5 854.7 191.3 C853.9 190.1 852.4 190.6 851.4 190.2" fill="none" stroke="#222" stroke-width="0.7" stroke-linejoin="round" stroke-linecap="round" />
<path d="M855.1 194.6 C855.3 195.2 855.7 195.9 856.0 196.5" fill="none" stroke="#222" stroke-width="0.7" stroke-linejoin="round" stroke-linecap="round" />
<path d="M851.1 198.3 C850.5 198.9 849.1 199.2 849.2 200.5 C849.3 201.8 849.1 202.1 851.4 202.7 C853.7 203.2 853.9 202.6 856.9 202.3 C859.9 202.0 860.1 201.8 861.5 201.6" fill="none" stroke="#222" stroke-width="0.7" stroke-linejoin="round" stroke-linecap="round" />
<path d="M853.2 198.3 C852.7 199.6 852.0 201.3 851.4 202.7" fill="none" stroke="#222" stroke-width="0.7" stroke-linejoin="round" stroke-linecap="round" />
<path d="M855.4 205.0 C854.1 205.3 852.8 205.1 851.1 205.9 C849.3 206.8 849.6 206.8 849.6 207.8 C849.6 208.8 850.6 208.8 851.1 209.2" fill="none" stroke="#222" stroke-width="0.7" stroke-linejoin="round" stroke-linecap="round" />
<path d="M851.4 210.7 C850.9 211.2 849.7 211.4 849.6 212.5 C849.5 213.6 849.8 214.1 851.1 214.3 C852.3 214.6 852.9 214.2 853.6 213.2 C854.3 212.3 853.9 211.8 853.2 211.1 C852.6 210.3 852.0 210.8 851.4 210.7" fill="none" stroke="#222" stroke-width="0.7" stroke-linejoin="round" stroke-linecap="round" />
<path d="M847.8 216.0 C848.6 215.7 849.1 214.8 850.5 215.1 C851.9 215.3 851.2 216.6 852.3 216.9 C853.4 217.2 853.3 217.1 854.2 216.0 C855.0 214.9 854.8 214.1 855.1 213.2" fill="none" stroke="#222" stroke-width="0.7" stroke-linejoin="round" stroke-linecap="round" />
<path d="M771.7 221.0 C772.0 219.3 770.9 220.2 773.5 219.2 C776.0 218.2 778.1 217.7 782.6 216.9 C787.1 216.2 789.9 214.0 792.6 216.0 C795.4 218.0 796.0 223.8 794.5 225.6 C793.0 227.4 789.7 223.8 786.3 223.8 C782.8 223.8 782.4 224.5 779.9 225.6 C777.3 226.7 777.1 228.1 775.3 228.3 C773.5 228.5 773.0 228.2 772.1 226.5 C771.3 224.8 771.3 222.7 771.7 221.0 Z" fill="#19c9b3" stroke="#145850" stroke-width="0.4" stroke-linejoin="round" stroke-linecap="round" />
<path d="M773.5 235.6 C774.3 233.8 774.6 234.3 777.1 233.4 C779.7 232.4 780.4 231.6 784.4 231.5 C788.5 231.4 792.1 230.7 794.5 232.9 C796.8 235.1 796.0 240.0 794.5 241.1 C793.0 242.2 791.1 237.9 788.1 237.5 C785.1 237.0 784.5 238.0 781.7 239.3 C778.9 240.6 778.1 242.5 776.2 242.9 C774.3 243.4 774.1 242.8 773.5 241.1 C772.8 239.4 772.6 237.4 773.5 235.6 Z" fill="#19c9b3" stroke="#145850" stroke-width="0.4" stroke-linejoin="round" stroke-linecap="round" />
<path d="M792.6 216.0 C793.4 212.7 794.0 214.2 797.2 213.3 C800.4 212.3 800.6 212.1 804.5 212.4 C808.4 212.6 808.2 212.1 811.8 214.2 C815.5 216.3 816.7 216.8 818.2 220.1 C819.7 223.4 820.0 224.3 817.3 226.5 C814.6 228.7 813.0 227.8 808.2 228.3 C803.3 228.8 802.7 229.1 799.0 228.3 C795.4 227.6 796.2 228.9 794.5 225.6 C792.8 222.3 791.9 219.3 792.6 216.0 Z" fill="#3d8c84" stroke="#145850" stroke-width="0.4" stroke-linejoin="round" stroke-linecap="round" />
<path d="M794.5 232.9 C795.4 229.2 795.4 229.5 799.0 228.3 C802.7 227.1 803.8 227.1 808.2 228.3 C812.5 229.5 812.5 229.5 815.5 232.9 C818.4 236.3 820.1 237.9 819.1 241.1 C818.1 244.3 816.2 243.5 811.8 244.8 C807.4 246.0 807.1 246.4 802.7 245.7 C798.3 244.9 797.6 245.4 795.4 242.0 C793.2 238.6 793.5 236.5 794.5 232.9 Z" fill="#3d8c84" stroke="#145850" stroke-width="0.4" stroke-linejoin="round" stroke-linecap="round" />
<path d="M797.2 213.3 L802.7 211.9 L809.1 213.3 L804.5 216.0 L799.0 215.6 Z" fill="#0b0b0d"  />
<path d="M799.9 213.0 L805.0 212.8 L803.1 215.4 Z" fill="#a030d0"  />
<path d="M819.1 224.7 L830.1 223.8 L831.9 231.1 L824.6 237.5 L821.8 233.8 Z" fill="#3d8c84"  />
<path d="M808.2 228.3 C808.7 226.1 815.6 221.9 818.2 221.5 C820.8 221.1 820.0 224.0 820.9 226.5 C821.8 229.0 823.1 230.9 822.8 233.8 C822.4 236.7 820.6 241.3 819.1 241.1 C817.6 240.9 817.6 235.5 815.5 232.9 C813.3 230.3 807.6 230.6 808.2 228.3 Z" fill="#19c9b3"  />
<path d="M824.6 237.5 C825.5 235.5 831.0 233.4 831.9 231.1 C832.8 228.8 829.1 225.2 830.1 223.8 C831.0 222.3 835.1 221.9 837.4 222.4 C839.6 222.9 841.2 226.2 843.8 226.5 C846.3 226.8 851.8 223.8 852.9 224.2 C853.9 224.7 849.8 228.1 850.1 229.2 C850.4 230.4 855.0 230.0 854.7 231.1 C854.4 232.1 849.8 234.0 848.3 235.6 C846.8 237.3 847.1 239.3 845.6 241.1 C844.1 242.9 841.2 246.0 839.2 246.6 C837.2 247.2 835.8 245.4 833.7 244.8 C831.6 244.2 827.9 244.2 826.4 242.9 C824.9 241.7 823.7 239.4 824.6 237.5 Z" fill="#19c9b3" stroke="#145850" stroke-width="0.4" stroke-linejoin="round" stroke-linecap="round" />
<path d="M841.0 229.2 L846.5 226.5 L850.1 229.2 L845.6 232.9 Z" fill="#3d8c84"  />
<path d="M813.6 248.4 C814.9 246.7 816.1 244.9 819.1 243.8 C822.1 242.8 823.4 243.4 826.4 243.8 C829.4 244.3 830.0 244.2 831.9 245.7 C833.8 247.2 834.8 248.6 834.6 250.2 C834.4 251.8 833.3 252.5 831.0 252.5 C828.6 252.5 827.4 250.3 824.6 250.2 C821.8 250.1 821.7 251.8 819.1 252.1 C816.6 252.3 814.9 252.0 813.6 251.1 C812.4 250.3 812.4 250.1 813.6 248.4 Z" fill="#19c9b3" stroke="#145850" stroke-width="0.4" stroke-linejoin="round" stroke-linecap="round" />
<path d="M835.5 232.9 L840.1 231.5 L841.0 235.6 L845.6 239.7 L841.9 244.8 L838.3 246.6 L835.5 242.9 Z" fill="#0b0b0d"  />
<path d="M836.9 233.8 L840.1 233.6 L839.6 235.6 Z" fill="#a030d0"  />
<path d="M840.1 239.3 L842.4 241.1 L840.1 244.8 L838.7 243.8 Z" fill="#a030d0"  />
  <path d="M666.3 74.8 L669.3 77.4 L671.5 84.6 L672.8 97.6 L673.2 112.6 L659.1 122.4 L632.4 121.7 L640.9 110.0 L650.0 97.6 L659.1 84.6 L664.3 76.1 Z" fill="#4ea789" stroke="#10261e" stroke-width="1.4" stroke-linejoin="round" stroke-linecap="round" />
<path d="M692.4 102.2 L694.6 105.4 L694.6 110.7 L693.0 115.9 L687.8 122.4 L674.8 126.3 L663.0 127.6 L655.2 126.3 L664.3 119.1 L673.5 112.6 L683.9 106.1 L690.4 102.6 Z" fill="#52aa8c" stroke="#10261e" stroke-width="1.4" stroke-linejoin="round" stroke-linecap="round" />
<path d="M593.0 138.4 L600.4 130.2 L607.3 125.0 L614.8 122.6 L620.0 122.0 L632.4 121.7 L640.9 114.6 L661.1 109.3 L657.8 122.4 L663.0 127.6 L674.8 125.6 L687.8 122.4 L695.6 123.7 L682.6 135.4 L672.2 144.6 L668.3 152.4 L667.0 160.2 L670.9 162.8 L659.1 168.0 L633.0 169.3 L607.0 164.1 L597.2 156.3 Z" fill="#7dc7a4" stroke="#10261e" stroke-width="1.4" stroke-linejoin="round" stroke-linecap="round" />
<path d="M632.4 121.7 C633.4 122.1 636.4 122.6 638.3 123.7 C640.1 124.8 642.6 127.5 643.5 128.3" fill="none" stroke="#10261e" stroke-width="0.8" stroke-linejoin="round" stroke-linecap="round" />
<path d="M648.0 130.9 C648.8 130.3 650.8 128.4 652.6 127.6 C654.5 126.8 657.4 126.3 659.1 126.3 C660.9 126.3 662.4 127.4 663.0 127.6" fill="none" stroke="#10261e" stroke-width="0.8" stroke-linejoin="round" stroke-linecap="round" />
<path d="M635.7 142.0 C636.7 141.5 640.1 140.0 642.2 139.3 C644.2 138.7 647.3 137.4 648.0 138.0 C648.8 138.7 647.1 141.6 646.7 143.3 C646.4 144.9 646.2 147.1 646.1 147.8" fill="none" stroke="#10261e" stroke-width="0.8" stroke-linejoin="round" stroke-linecap="round" />
<path d="M635.7 142.0 C636.5 143.0 638.7 146.5 640.9 148.5 C643.0 150.4 647.4 152.8 648.7 153.7" fill="none" stroke="#10261e" stroke-width="0.8" stroke-linejoin="round" stroke-linecap="round" />
<path d="M663.0 138.0 C663.2 137.0 663.3 133.1 663.7 131.5 C664.1 129.9 665.3 128.8 665.7 128.3" fill="none" stroke="#10261e" stroke-width="0.8" stroke-linejoin="round" stroke-linecap="round" />
<path d="M663.0 143.3 C663.4 142.4 663.5 139.8 665.0 138.0 C666.5 136.3 671.0 133.7 672.2 132.8" fill="none" stroke="#10261e" stroke-width="0.8" stroke-linejoin="round" stroke-linecap="round" />
<path d="M728.3 106.1 L730.2 108.7 L730.3 114.6 L728.3 125.0 L724.3 132.2 L719.1 138.7 L711.3 145.9 L704.8 151.1 L693.0 156.3 L682.6 159.6 L670.9 162.2 L663.7 159.6 L662.8 153.7 L663.7 148.5 L672.2 138.0 L680.0 131.5 L687.8 126.3 L695.6 123.0 L703.5 121.1 L711.3 117.2 L720.4 110.0 L726.3 106.3 Z" fill="#9abdae" stroke="#10261e" stroke-width="1.4" stroke-linejoin="round" stroke-linecap="round" />
<path d="M663.7 148.5 L672.2 138.0 L680.0 131.5 L687.8 126.3 L695.6 123.0 L703.5 121.1 L706.1 120.4 L693.0 127.0 L681.3 134.1 L672.2 142.0 L665.7 148.5 L664.1 156.3 L663.7 159.6 L662.8 153.7 Z" fill="#80c9a6"  />
<path d="M681.3 134.8 L693.0 127.6 L704.8 122.4 L699.6 132.8 L693.0 143.3 L687.8 149.8 L683.9 148.5 L683.3 138.7 Z" fill="#7aa896"  />
<path d="M728.3 106.1 L730.2 108.7 L730.3 114.6 L728.3 125.0 L724.3 132.2 L719.1 138.7 L711.3 145.9 L704.8 151.1 L693.0 156.3 L682.6 159.6 L670.9 162.2 L663.7 159.6 L662.8 153.7 L663.7 148.5 L672.2 138.0 L680.0 131.5 L687.8 126.3 L695.6 123.0 L703.5 121.1 L711.3 117.2 L720.4 110.0 L726.3 106.3 Z" fill="none" stroke="#10261e" stroke-width="1.4" stroke-linejoin="round" stroke-linecap="round" />
<path d="M665.7 148.5 C666.7 147.4 669.6 144.2 672.2 142.0 C674.8 139.7 677.8 137.1 681.3 134.8 C684.8 132.4 689.1 129.9 693.0 127.9 C697.0 125.8 702.8 123.3 704.8 122.4" fill="none" stroke="#10261e" stroke-width="0.6" stroke-linejoin="round" stroke-linecap="round" />
<path d="M665.0 151.7 L672.2 145.9 L683.3 137.4 L683.9 148.5 L689.1 149.1 L681.3 155.0 L684.2 156.3 L677.4 159.2 L672.2 161.3 L670.9 155.0 L667.0 157.0 Z" fill="#b7ddcc" stroke="#10261e" stroke-width="0.8" stroke-linejoin="round" stroke-linecap="round" />
<path d="M559.1 145.9 L567.0 144.8 L576.1 143.3 L585.2 140.7 L593.0 138.0 L601.5 139.3 L598.9 146.5 L600.2 153.0 L600.9 157.6 L594.3 162.8 L587.8 166.7 L573.5 168.0 L576.7 160.2 L580.7 152.4 L569.6 149.8 Z" fill="#55a4f2"  />
<path d="M580.7 153.0 L589.1 151.1 L599.6 148.5 L600.9 157.6 L587.8 166.5 L574.1 167.7 L577.1 160.2 Z" fill="#4b99e8"  />
<path d="M602.2 137.4 L593.0 138.0 L585.2 140.7 L576.1 143.3 L567.0 144.8 L559.1 145.9 L569.6 149.8 L580.7 152.4 L576.7 160.2 L573.5 168.0 L587.8 166.7 L594.3 162.8 L601.5 157.6" fill="none" stroke="#10261e" stroke-width="1.4" stroke-linejoin="round" stroke-linecap="round" />
<path d="M665.2 164.8 L684.8 158.9 L708.3 152.4 L711.5 154.1 L712.8 159.6 L710.9 167.4 L708.3 173.9 L700.4 183.0 L690.0 189.6 L679.6 194.8 L669.1 197.4 L662.6 189.6 L662.6 172.6 Z" fill="#3f776c" stroke="#10261e" stroke-width="1.4" stroke-linejoin="round" stroke-linecap="round" />
<path d="M680.2 172.0 C681.4 171.5 684.8 170.3 687.4 169.3 C690.0 168.4 694.5 166.6 695.9 166.1" fill="none" stroke="#10261e" stroke-width="0.7" stroke-linejoin="round" stroke-linecap="round" />
<circle cx="677.2" cy="168.0" r="1" fill="#10261e"/>
<path d="M620.4 149.1 C616.7 148.6 614.3 150.5 611.3 151.7 C608.3 152.9 605.4 154.5 602.2 156.3 C598.9 158.2 595.2 160.4 591.7 162.8 C588.3 165.2 584.0 168.3 581.3 170.7 C578.6 173.0 576.9 175.0 575.4 177.2 C574.0 179.3 573.0 181.7 572.4 183.7 C571.9 185.6 571.9 187.2 572.2 188.9 C572.5 190.6 573.5 192.6 574.1 194.1 C574.8 195.6 574.9 196.4 576.1 198.0 C577.3 199.7 579.6 202.2 581.3 203.9 C583.0 205.6 584.3 207.1 586.5 208.5 C588.7 209.8 591.7 211.3 594.3 212.1 C597.0 213.0 599.1 213.5 602.2 213.7 C605.2 213.8 609.1 213.4 612.6 213.0 C616.1 212.7 619.1 212.5 623.0 211.7 C627.0 211.0 631.7 209.7 636.1 208.5 C640.4 207.3 645.6 205.8 649.1 204.6 C652.6 203.4 656.1 204.3 657.0 201.3 C657.8 198.3 656.5 191.6 654.3 186.3 C652.2 181.0 647.4 174.6 643.9 169.3 C640.4 164.1 637.4 158.4 633.5 155.0 C629.6 151.6 624.1 149.7 620.4 149.1 Z" fill="#1d1d1f" stroke="#10261e" stroke-width="1.3" stroke-linejoin="round" stroke-linecap="round" />
<path d="M574.8 194.8 L589.1 192.8 L611.3 190.2 L630.9 185.6 L645.9 181.7 L653.0 192.8 L655.6 200.6 L649.1 203.9 L636.1 207.8 L623.0 211.1 L602.2 213.0 L587.2 208.2 L580.7 203.3 Z" fill="#151517"  />
<path d="M619.1 144.6 L621.1 142.2 L625.6 141.3 L633.5 148.5 L641.3 156.3 L647.8 162.8 L654.3 168.0 L649.1 173.3 L641.3 164.1 L633.5 155.0 L627.0 151.1 L621.1 148.5 Z" fill="#3f776c" stroke="#10261e" stroke-width="1.4" stroke-linejoin="round" stroke-linecap="round" />
<circle cx="662.6" cy="183.8" r="17" fill="#3f776c" stroke="#10261e" stroke-width="1.2"/>
<circle cx="662.6" cy="183.8" r="10.3" fill="#09090b" stroke="#10261e" stroke-width="1"/>
<path d="M666.8000000000001 167.60000000000002 L668.6 174.8 M658.0 200.10000000000002 L658.2 193.4" stroke="#10261e" stroke-width=".8" fill="none"/>
<path d="M662.1 185.0 L658.2 179.20000000000002 M662.1 185.0 L667.8000000000001 186.4 M662.1 185.0 L659.4 190.20000000000002" stroke="#a436e6" stroke-width="2.8" stroke-linecap="round" fill="none" filter="url(#glow)"/>
<g filter="url(#glow)" fill="#9b5cf5">
<path d="M610.6 179.8 L612.3 174.6 L615.2 170.7 L620.4 168.7 L626.3 171.3 L621.1 172.0 L616.5 174.6 Z" fill="#9b5cf5"  />
<path d="M580.0 188.6 L582.6 188.4 L591.7 193.1 L590.7 195.0 L581.3 191.3 Z" fill="#9b5cf5"  />
<path d="M587.2 203.9 L599.6 199.3 L602.2 203.3 L613.9 194.8 L615.2 202.0 L622.4 192.2 L623.3 195.4 L615.2 204.2 L612.6 199.6 L602.8 206.8 L598.9 202.9 L590.7 207.8 Z" fill="#9b5cf5"  />
</g>
<path d="M652.6 205.0 C652.8 207.2 653.4 213.5 654.0 218.0 C654.6 222.5 655.5 227.2 656.0 232.0 C656.5 236.8 657.1 244.5 657.3 247.0" fill="none" stroke="#777" stroke-width="0.9" stroke-linejoin="round" stroke-linecap="round" />
  <path d="M655.8 235.0 C656.1 236.9 656.2 237.4 656.9 241.3 C657.5 245.1 657.6 245.9 657.9 247.9" fill="none" stroke="#6a6a6a" stroke-width="0.85" stroke-linejoin="round" stroke-linecap="round" />
<path d="M571.3 262.1 C575.1 261.6 574.4 259.8 582.8 260.5 C591.1 261.2 588.3 259.5 596.3 264.2 C604.3 268.9 601.4 266.6 606.8 274.6 C612.2 282.6 611.6 278.5 612.6 288.2 C613.7 298.0 613.9 294.1 609.9 303.9 C605.9 313.6 607.5 310.5 600.5 317.4 C593.6 324.4 596.7 322.3 589.0 324.7 C581.4 327.2 584.5 328.2 577.6 324.7 C570.6 321.3 572.9 323.3 568.2 314.3 C563.4 305.3 564.8 308.7 563.4 297.6 C562.0 286.5 562.7 290.6 564.0 280.9 C565.3 271.2 564.6 274.8 567.1 268.4 C569.7 262.0 570.2 263.9 571.7 261.7" fill="none" stroke="#6a6a6a" stroke-width="0.85" stroke-linejoin="round" stroke-linecap="round" />
<path d="M580.7 279.9 C584.1 277.7 583.1 277.9 592.2 272.6 C601.2 267.2 598.4 267.0 611.0 262.1 C623.5 257.2 620.1 258.5 633.9 256.3 C647.7 254.1 642.5 254.9 656.9 254.8 C671.3 254.7 667.5 254.0 681.9 255.9 C696.3 257.7 692.3 257.0 704.9 261.1 C717.4 265.2 714.2 264.4 723.6 269.4 C733.0 274.4 732.4 275.3 736.2 277.8" fill="none" stroke="#6a6a6a" stroke-width="0.85" stroke-linejoin="round" stroke-linecap="round" />
<path d="M623.5 266.3 C629.7 264.3 631.8 262.8 644.3 259.6 C656.9 256.5 655.2 256.2 665.2 255.9 C675.2 255.5 674.0 257.6 677.7 258.4" fill="none" stroke="#6a6a6a" stroke-width="0.85" stroke-linejoin="round" stroke-linecap="round" />
<path d="M616.2 262.1 C622.1 260.6 622.5 259.3 636.0 256.9 C649.5 254.5 651.0 254.6 661.0 254.2 C671.1 253.8 666.9 255.1 669.4 255.5" fill="none" stroke="#6a6a6a" stroke-width="0.85" stroke-linejoin="round" stroke-linecap="round" />
<path d="M696.5 259.0 C699.6 260.3 700.7 260.5 706.9 263.2 C713.2 265.9 714.2 266.5 717.4 268.0" fill="none" stroke="#6a6a6a" stroke-width="0.85" stroke-linejoin="round" stroke-linecap="round" />
<path d="M594.7 262.5 C596.7 264.9 599.5 268.1 601.6 270.5" fill="none" stroke="#6a6a6a" stroke-width="0.85" stroke-linejoin="round" stroke-linecap="round" />
<path d="M580.7 279.9 C580.1 281.1 577.4 280.0 578.6 284.0 C579.9 288.1 581.4 286.2 584.9 293.4 C588.3 300.6 587.9 299.3 590.1 308.0 C592.3 316.8 591.5 318.3 592.2 322.6" fill="none" stroke="#6a6a6a" stroke-width="0.85" stroke-linejoin="round" stroke-linecap="round" />
<path d="M595.3 282.0 C595.3 285.4 596.9 285.6 595.3 293.4 C593.7 301.3 592.9 299.9 590.1 308.0 C587.3 316.2 587.2 316.8 585.9 320.6" fill="none" stroke="#6a6a6a" stroke-width="0.85" stroke-linejoin="round" stroke-linecap="round" />
<path d="M592.2 297.6 C590.6 305.1 590.1 308.9 587.0 322.6 C583.8 336.4 584.2 329.1 581.7 343.5 C579.2 357.9 580.2 355.2 578.6 370.6 C577.0 386.1 577.1 387.7 576.5 395.1" fill="none" stroke="#6a6a6a" stroke-width="0.85" stroke-linejoin="round" stroke-linecap="round" />
<path d="M586.3 308.0 C588.7 313.7 590.0 314.9 594.3 326.8 C598.5 338.7 596.8 337.0 600.5 347.7 C604.3 358.3 603.8 354.8 606.8 362.3 C609.8 369.8 609.3 362.9 610.5 372.7 C611.8 382.6 610.8 388.4 611.0 395.1" fill="none" stroke="#6a6a6a" stroke-width="0.85" stroke-linejoin="round" stroke-linecap="round" />
<path d="M593.8 297.6 C592.4 303.9 592.4 306.0 589.0 318.5 C585.7 331.0 584.7 333.1 582.8 339.3" fill="none" stroke="#6a6a6a" stroke-width="0.85" stroke-linejoin="round" stroke-linecap="round" />
<path d="M602.2 348.7 C603.6 352.8 605.4 358.2 606.8 362.3" fill="none" stroke="#6a6a6a" stroke-width="0.85" stroke-linejoin="round" stroke-linecap="round" />
<path d="M728.9 249.2 C732.7 250.0 732.3 247.4 740.3 251.7 C748.3 256.0 746.2 253.8 752.9 262.1 C759.5 270.5 758.1 267.0 760.2 276.7 C762.2 286.5 762.2 281.6 759.1 291.3 C756.0 301.1 758.4 298.0 750.8 306.0 C743.1 314.0 746.6 310.8 736.2 315.3 C725.7 319.9 729.9 319.2 719.5 319.5 C709.0 319.9 712.5 320.9 704.9 316.4 C697.2 311.9 700.0 313.6 696.5 306.0 C693.0 298.3 693.7 302.5 694.4 293.4 C695.1 284.4 694.4 287.9 698.6 278.8 C702.8 269.8 698.9 273.6 706.9 266.3 C714.9 259.0 717.4 260.0 722.6 256.9" fill="none" stroke="#6a6a6a" stroke-width="0.85" stroke-linejoin="round" stroke-linecap="round" />
<path d="M744.5 279.2 C741.4 283.5 739.1 284.8 734.1 293.4 C729.1 302.1 730.6 299.3 727.8 308.0 C725.0 316.8 727.8 312.0 724.7 322.6 C721.6 333.3 721.1 331.0 717.4 343.5 C713.6 356.0 714.7 348.9 712.2 364.4 C709.7 379.8 710.0 385.9 709.0 395.1" fill="none" stroke="#6a6a6a" stroke-width="0.85" stroke-linejoin="round" stroke-linecap="round" />
<path d="M717.0 286.8 C717.7 290.6 717.1 290.2 719.5 299.7 C721.8 309.2 722.2 307.8 724.7 318.5 C727.2 329.1 725.0 323.9 727.8 335.2 C730.6 346.4 730.3 343.5 734.1 356.0 C737.8 368.6 737.8 365.2 740.3 376.9 C742.8 388.6 741.8 389.6 742.4 395.1" fill="none" stroke="#6a6a6a" stroke-width="0.85" stroke-linejoin="round" stroke-linecap="round" />
<path d="M724.7 322.6 C726.9 328.9 727.9 329.7 732.0 343.5 C736.1 357.3 735.4 357.3 738.2 368.6 C741.1 379.8 740.4 377.3 741.4 381.1" fill="none" stroke="#6a6a6a" stroke-width="0.85" stroke-linejoin="round" stroke-linecap="round" />
<path d="M728.9 312.2 C727.3 316.6 725.2 322.4 723.6 326.8" fill="none" stroke="#6a6a6a" stroke-width="0.85" stroke-linejoin="round" stroke-linecap="round" />
<path d="M608.9 372.7 C613.2 370.5 614.1 369.2 623.5 365.4 C632.9 361.7 630.2 362.4 640.2 360.2 C650.2 358.0 646.8 358.4 656.9 358.1 C666.9 357.8 663.5 357.6 673.6 359.2 C683.6 360.7 680.9 360.8 690.3 363.3 C699.6 365.8 698.6 365.3 704.9 367.5 C711.1 369.7 709.2 369.7 711.1 370.6" fill="none" stroke="#6a6a6a" stroke-width="0.85" stroke-linejoin="round" stroke-linecap="round" />
<path d="M654.8 357.7 C657.9 357.3 658.3 355.6 665.2 356.5 C672.1 357.3 674.0 359.4 677.7 360.6" fill="none" stroke="#6a6a6a" stroke-width="0.85" stroke-linejoin="round" stroke-linecap="round" />
<path d="M694.4 359.8 C697.6 360.9 699.8 360.1 704.9 363.3 C709.9 366.6 709.6 365.3 711.1 370.6 C712.7 376.0 710.7 373.8 710.1 381.1 C709.4 388.4 709.3 390.9 709.0 395.1" fill="none" stroke="#6a6a6a" stroke-width="0.85" stroke-linejoin="round" stroke-linecap="round" />
<path d="M532.8 377.7 C532.7 378.3 532.9 378.3 532.6 379.5 C532.2 380.6 532.5 380.1 531.8 381.1 C531.2 382.1 531.6 381.6 530.7 382.4 C529.8 383.2 530.2 382.9 529.2 383.5 C528.1 384.1 528.6 383.9 527.4 384.2 C526.2 384.5 526.8 384.4 525.5 384.4 C524.2 384.4 524.8 384.5 523.6 384.2 C522.4 383.9 522.9 384.1 521.8 383.5 C520.7 382.9 521.2 383.2 520.3 382.4 C519.4 381.6 519.8 382.1 519.2 381.1 C518.5 380.1 518.8 380.6 518.4 379.5 C518.1 378.3 518.2 378.9 518.2 377.7 C518.2 376.6 518.1 377.1 518.4 376.0 C518.8 374.9 518.5 375.4 519.2 374.4 C519.8 373.4 519.4 373.8 520.3 373.0 C521.2 372.2 520.7 372.5 521.8 372.0 C522.9 371.4 522.4 371.6 523.6 371.3 C524.8 371.0 524.2 371.1 525.5 371.1 C526.8 371.1 526.2 371.0 527.4 371.3 C528.6 371.6 528.1 371.4 529.2 372.0 C530.2 372.5 529.8 372.2 530.7 373.0 C531.6 373.8 531.2 373.4 531.8 374.4 C532.5 375.4 532.2 374.9 532.6 376.0 C532.9 377.1 532.7 377.2 532.8 377.7" fill="none" stroke="#6a6a6a" stroke-width="0.85" stroke-linejoin="round" stroke-linecap="round" />
<path d="M522.2 373.7 C528.8 380.3 528.7 382.3 544.3 395.5 C560.0 408.6 565.3 411.0 574.3 417.6" fill="none" stroke="#6a6a6a" stroke-width="0.85" stroke-linejoin="round" stroke-linecap="round" />
<path d="M527.7 378.8 C533.7 384.8 534.0 387.5 547.7 398.8 C561.3 410.1 565.5 411.2 573.2 416.5" fill="none" stroke="#6a6a6a" stroke-width="0.85" stroke-linejoin="round" stroke-linecap="round" />
<path d="M539.9 388.8 C547.2 395.5 557.0 404.3 564.3 411.0" fill="none" stroke="#6a6a6a" stroke-width="0.85" stroke-linejoin="round" stroke-linecap="round" />
<path d="M585.6 422.4 C585.2 423.7 585.5 423.9 584.5 426.4 C583.5 428.9 584.1 427.8 582.6 430.0 C581.2 432.2 581.9 431.2 580.1 432.9 C578.3 434.6 579.2 433.9 577.2 435.0 C575.2 436.0 576.2 435.7 574.0 436.0 C571.9 436.4 572.9 436.4 570.8 436.0 C568.8 435.7 569.7 436.0 567.8 434.9 C565.9 433.9 566.7 434.5 565.2 432.9 C563.6 431.2 564.3 432.1 563.1 429.9 C562.0 427.7 562.4 428.9 561.8 426.3 C561.2 423.8 561.4 425.0 561.3 422.3 C561.2 419.6 561.1 420.9 561.6 418.2 C562.1 415.5 561.7 416.7 562.7 414.2 C563.7 411.7 563.1 412.8 564.6 410.6 C566.0 408.4 565.3 409.3 567.1 407.7 C568.9 406.0 568.0 406.7 570.0 405.6 C572.0 404.6 571.0 404.9 573.2 404.6 C575.3 404.2 574.3 404.2 576.4 404.6 C578.4 404.9 577.5 404.6 579.4 405.7 C581.3 406.7 580.4 406.1 582.0 407.7 C583.6 409.4 582.9 408.5 584.0 410.7 C585.2 412.9 584.8 411.7 585.4 414.3 C586.0 416.8 585.8 415.6 585.9 418.3 C586.0 421.0 585.7 421.0 585.6 422.4" fill="none" stroke="#6a6a6a" stroke-width="0.85" stroke-linejoin="round" stroke-linecap="round" />
<path d="M582.0 360.0 C581.0 366.7 580.7 368.9 578.7 382.2 C576.7 395.5 577.0 394.0 575.4 404.3 C573.7 414.6 573.8 412.9 573.2 416.5" fill="none" stroke="#6a6a6a" stroke-width="0.85" stroke-linejoin="round" stroke-linecap="round" />
<path d="M576.5 396.6 C575.8 402.9 574.9 411.3 574.3 417.6" fill="none" stroke="#6a6a6a" stroke-width="0.85" stroke-linejoin="round" stroke-linecap="round" />
<path d="M581.6 398.8 C580.0 405.0 578.0 413.2 576.5 419.4" fill="none" stroke="#6a6a6a" stroke-width="0.85" stroke-linejoin="round" stroke-linecap="round" />
<path d="M609.7 373.3 C610.1 377.3 610.5 376.0 610.8 386.6 C611.2 397.2 611.5 396.8 610.8 408.8 C610.2 420.7 609.0 415.9 608.6 426.5 C608.3 437.1 607.7 432.9 609.7 444.2 C611.7 455.5 611.0 453.5 615.3 464.2 C619.6 474.8 618.8 472.4 624.1 479.7 C629.5 487.0 625.0 484.3 633.0 488.6 C641.0 492.9 641.4 491.6 650.7 494.1 C660.1 496.6 656.1 497.0 664.0 497.0 C672.0 497.0 670.0 498.0 677.3 494.1 C684.7 490.3 681.8 492.5 688.4 484.1 C695.1 475.8 693.9 477.0 699.5 466.4 C705.2 455.8 704.6 459.3 707.3 448.7 C709.9 438.0 709.0 440.9 708.4 430.9 C707.7 421.0 705.4 426.1 705.1 415.4 C704.7 404.8 705.6 408.1 707.3 395.5 C708.9 382.8 708.9 383.9 710.6 373.3 C712.3 362.7 712.1 364.0 712.8 360.0" fill="none" stroke="#6a6a6a" stroke-width="0.85" stroke-linejoin="round" stroke-linecap="round" />
<path d="M608.6 373.3 C613.3 371.0 614.2 369.2 624.1 365.5 C634.1 361.9 631.2 363.1 641.9 361.1 C652.5 359.1 649.0 359.2 659.6 358.9 C670.3 358.6 666.7 358.7 677.3 360.0 C688.0 361.3 685.1 360.3 695.1 363.3 C705.1 366.3 705.9 368.0 710.6 370.0" fill="none" stroke="#6a6a6a" stroke-width="0.85" stroke-linejoin="round" stroke-linecap="round" />
<path d="M606.4 360.0 C607.7 363.3 609.2 361.8 610.8 371.1 C612.5 380.4 612.3 377.1 611.9 391.0 C611.6 405.0 610.1 405.7 609.7 417.6 C609.4 429.6 610.5 426.9 610.8 430.9" fill="none" stroke="#6a6a6a" stroke-width="0.85" stroke-linejoin="round" stroke-linecap="round" />
<path d="M709.5 375.5 C709.2 380.2 709.7 380.4 708.4 391.0 C707.0 401.7 706.4 401.0 705.1 411.0 C703.7 421.0 704.3 420.3 703.9 424.3" fill="none" stroke="#6a6a6a" stroke-width="0.85" stroke-linejoin="round" stroke-linecap="round" />
<path d="M710.6 386.6 C710.3 391.3 709.8 397.5 709.5 402.1" fill="none" stroke="#6a6a6a" stroke-width="0.85" stroke-linejoin="round" stroke-linecap="round" />
<path d="M622.4 450.9 C620.9 455.5 620.0 456.4 617.5 466.4 C615.0 476.4 616.2 472.2 614.2 484.1 C612.2 496.1 613.2 492.5 610.8 506.3 C608.5 520.1 607.7 522.9 606.4 530.0" fill="none" stroke="#6a6a6a" stroke-width="0.85" stroke-linejoin="round" stroke-linecap="round" />
<path d="M617.5 468.6 C616.2 477.3 615.7 479.0 613.1 497.4 C610.4 515.9 610.0 520.3 608.6 530.0" fill="none" stroke="#6a6a6a" stroke-width="0.85" stroke-linejoin="round" stroke-linecap="round" />
<path d="M615.3 499.7 C613.9 504.3 612.2 510.5 610.8 515.2" fill="none" stroke="#6a6a6a" stroke-width="0.85" stroke-linejoin="round" stroke-linecap="round" />
<path d="M684.4 466.0 C685.3 470.4 685.1 470.0 687.3 480.8 C689.5 491.6 689.1 487.1 691.8 501.9 C694.4 516.6 694.9 521.6 696.2 530.0" fill="none" stroke="#6a6a6a" stroke-width="0.85" stroke-linejoin="round" stroke-linecap="round" />
<path d="M686.2 475.3 C687.5 480.6 688.3 481.0 690.6 493.0 C693.0 505.0 692.0 504.1 694.0 515.2 C696.0 526.3 696.3 525.6 697.3 530.0" fill="none" stroke="#6a6a6a" stroke-width="0.85" stroke-linejoin="round" stroke-linecap="round" />
<path d="M684.0 496.3 C685.3 498.7 685.8 497.1 688.4 504.1 C691.1 511.1 691.5 515.0 692.9 519.6" fill="none" stroke="#6a6a6a" stroke-width="0.85" stroke-linejoin="round" stroke-linecap="round" />
<path d="M685.3 470.8 C686.3 474.8 687.5 480.2 688.4 484.1" fill="none" stroke="#6a6a6a" stroke-width="1.6" stroke-linejoin="round" stroke-linecap="round" />
<path d="M670.7 495.2 C674.7 492.6 676.0 493.7 684.0 486.4 C692.0 479.0 690.0 480.8 697.3 470.8 C704.6 460.9 705.1 458.4 708.4 453.1" fill="none" stroke="#6a6a6a" stroke-width="0.85" stroke-linejoin="round" stroke-linecap="round" />
<path d="M677.3 493.0 C681.3 489.7 684.0 488.6 690.6 481.9 C697.3 475.3 696.9 474.2 699.5 470.8" fill="none" stroke="#6a6a6a" stroke-width="0.85" stroke-linejoin="round" stroke-linecap="round" />
<path d="M731.7 360.0 C733.7 366.7 734.0 366.9 738.3 382.2 C742.6 397.5 742.1 396.0 746.1 411.0 C750.1 425.9 749.9 425.7 751.6 432.0" fill="none" stroke="#6a6a6a" stroke-width="0.85" stroke-linejoin="round" stroke-linecap="round" />
<path d="M735.0 360.0 C737.0 366.0 738.0 366.7 741.6 380.0 C745.3 393.3 744.5 390.4 747.2 404.3 C749.8 418.3 749.5 419.9 750.5 426.5" fill="none" stroke="#6a6a6a" stroke-width="0.85" stroke-linejoin="round" stroke-linecap="round" />
<path d="M740.5 424.3 C744.0 420.4 748.7 415.3 752.3 411.4" fill="none" stroke="#6a6a6a" stroke-width="0.85" stroke-linejoin="round" stroke-linecap="round" />
<path d="M756.4 437.6 C755.7 439.0 755.9 439.1 754.3 441.7 C752.8 444.3 753.6 443.2 751.7 445.3 C749.9 447.4 750.8 446.5 748.8 448.0 C746.8 449.6 747.7 449.0 745.7 449.8 C743.6 450.7 744.6 450.4 742.6 450.5 C740.7 450.6 741.6 450.7 739.9 450.0 C738.2 449.4 738.9 449.8 737.5 448.4 C736.2 447.1 736.7 447.9 735.8 445.8 C734.9 443.8 735.2 444.9 734.8 442.4 C734.4 439.9 734.5 441.2 734.6 438.4 C734.8 435.6 734.6 436.9 735.3 434.0 C735.9 431.1 735.5 432.4 736.6 429.6 C737.8 426.8 737.2 428.1 738.7 425.5 C740.2 422.9 739.4 424.0 741.3 421.9 C743.1 419.8 742.2 420.7 744.2 419.2 C746.2 417.6 745.3 418.2 747.3 417.4 C749.4 416.5 748.4 416.8 750.4 416.7 C752.3 416.6 751.4 416.5 753.2 417.2 C754.9 417.8 754.1 417.3 755.5 418.7 C756.8 420.1 756.3 419.3 757.2 421.4 C758.1 423.4 757.8 422.3 758.2 424.8 C758.6 427.3 758.5 426.0 758.4 428.8 C758.2 431.6 758.4 430.3 757.8 433.2 C757.1 436.1 756.8 436.1 756.4 437.6" fill="none" stroke="#6a6a6a" stroke-width="0.85" stroke-linejoin="round" stroke-linecap="round" />
<path d="M751.6 432.0 C750.3 435.7 749.2 434.6 747.2 444.2 C745.2 453.9 746.6 451.6 745.0 464.2 C743.3 476.8 743.6 474.4 741.6 486.4 C739.6 498.3 739.3 498.8 738.3 504.1" fill="none" stroke="#6a6a6a" stroke-width="0.85" stroke-linejoin="round" stroke-linecap="round" />
<path d="M742.5 511.9 C742.5 512.5 742.6 512.6 742.3 513.9 C742.1 515.2 742.2 514.6 741.7 515.8 C741.2 517.0 741.5 516.5 740.8 517.5 C740.1 518.5 740.5 518.1 739.6 518.8 C738.8 519.5 739.2 519.2 738.2 519.6 C737.3 519.9 737.7 519.8 736.8 519.8 C735.8 519.8 736.2 519.9 735.3 519.6 C734.3 519.2 734.7 519.5 733.9 518.8 C733.0 518.1 733.4 518.5 732.7 517.5 C732.0 516.5 732.3 517.0 731.8 515.8 C731.3 514.6 731.4 515.2 731.2 513.9 C730.9 512.6 731.0 513.2 731.0 511.9 C731.0 510.5 730.9 511.1 731.2 509.8 C731.4 508.5 731.3 509.1 731.8 507.9 C732.3 506.7 732.0 507.2 732.7 506.2 C733.4 505.2 733.0 505.6 733.9 504.9 C734.7 504.3 734.3 504.5 735.3 504.1 C736.2 503.8 735.8 503.9 736.8 503.9 C737.7 503.9 737.3 503.8 738.2 504.1 C739.2 504.5 738.8 504.3 739.6 504.9 C740.5 505.6 740.1 505.2 740.8 506.2 C741.5 507.2 741.2 506.7 741.7 507.9 C742.2 509.1 742.1 508.5 742.3 509.8 C742.6 511.1 742.5 511.2 742.5 511.9" fill="none" stroke="#6a6a6a" stroke-width="0.85" stroke-linejoin="round" stroke-linecap="round" />
<path d="M612.0 510.0 C610.3 518.2 609.8 520.9 606.5 537.4 C603.2 553.8 603.5 548.3 601.0 564.7 C598.6 581.1 599.1 575.7 598.3 592.1 C597.5 608.5 598.7 603.0 598.3 619.4 C597.9 635.9 596.9 630.4 596.9 646.8 C596.9 663.2 597.5 654.0 598.3 674.2 C599.1 694.3 599.3 701.9 599.7 713.8" fill="none" stroke="#6a6a6a" stroke-width="0.85" stroke-linejoin="round" stroke-linecap="round" />
<path d="M609.2 510.0 C607.6 519.8 607.2 522.3 603.8 542.8 C600.3 563.4 599.8 565.3 597.8 578.4 C595.7 591.5 597.2 584.1 596.9 586.6" fill="none" stroke="#6a6a6a" stroke-width="0.85" stroke-linejoin="round" stroke-linecap="round" />
<path d="M610.6 515.5 C609.0 528.6 607.6 533.8 605.1 559.2 C602.7 584.7 603.6 578.1 602.4 600.3 C601.2 622.4 601.9 614.2 601.0 633.1 C600.2 652.0 600.9 644.3 599.7 663.2 C598.4 682.1 597.9 680.9 596.9 696.0 C596.0 711.2 596.6 708.5 596.4 713.8" fill="none" stroke="#6a6a6a" stroke-width="0.85" stroke-linejoin="round" stroke-linecap="round" />
<path d="M598.3 592.1 C599.9 604.4 604.2 611.8 603.8 633.1 C603.4 654.5 597.3 646.8 596.9 663.2 C596.5 679.6 600.4 672.7 602.4 687.8 C604.5 703.0 603.4 706.0 603.8 713.8" fill="none" stroke="#6a6a6a" stroke-width="0.85" stroke-linejoin="round" stroke-linecap="round" />
<path d="M594.2 666.0 C595.4 671.7 597.1 679.4 598.3 685.1" fill="none" stroke="#6a6a6a" stroke-width="0.85" stroke-linejoin="round" stroke-linecap="round" />
<path d="M591.5 612.6 C590.8 615.8 589.1 615.8 589.5 622.2 C590.0 628.6 589.5 627.9 592.8 631.8 C596.2 635.6 595.3 635.5 599.7 633.7 C604.0 631.8 603.2 632.8 606.0 626.3 C608.7 619.7 607.0 620.8 607.9 614.0 C608.8 607.1 608.4 608.5 608.7 605.8" fill="none" stroke="#6a6a6a" stroke-width="0.85" stroke-linejoin="round" stroke-linecap="round" />
<path d="M586.0 713.8 C587.4 711.1 586.0 709.3 590.1 705.6 C594.2 702.0 593.3 702.4 598.3 702.9 C603.3 703.3 603.3 703.3 605.1 707.0 C607.0 710.6 604.2 711.6 603.8 713.8" fill="none" stroke="#6a6a6a" stroke-width="0.85" stroke-linejoin="round" stroke-linecap="round" />
<path d="M690.8 510.0 C692.2 516.6 692.0 517.9 695.4 531.9 C698.9 545.8 698.2 542.6 702.3 556.5 C706.4 570.5 705.4 566.9 709.1 578.4 C712.8 589.9 712.9 589.9 714.6 594.8" fill="none" stroke="#6a6a6a" stroke-width="0.85" stroke-linejoin="round" stroke-linecap="round" />
<path d="M692.7 510.0 C693.9 517.4 694.3 521.5 696.8 534.6 C699.3 547.8 699.4 542.4 700.9 553.8 C702.4 565.1 701.5 566.8 701.7 572.4" fill="none" stroke="#6a6a6a" stroke-width="0.85" stroke-linejoin="round" stroke-linecap="round" />
<path d="M705.0 566.1 C707.1 571.0 709.8 577.6 711.8 582.5" fill="none" stroke="#6a6a6a" stroke-width="0.85" stroke-linejoin="round" stroke-linecap="round" />
<path d="M715.4 597.6 C716.0 600.0 717.2 599.2 717.3 605.8 C717.5 612.3 716.4 607.1 716.0 619.4 C715.5 631.8 716.1 630.4 716.0 646.8 C715.8 663.2 715.4 657.7 715.4 674.2 C715.4 690.6 715.8 693.3 716.0 701.5" fill="none" stroke="#6a6a6a" stroke-width="0.85" stroke-linejoin="round" stroke-linecap="round" />
<path d="M713.2 604.4 C714.4 610.5 717.3 613.4 717.3 624.9 C717.3 636.4 714.4 637.4 713.2 642.7" fill="none" stroke="#6a6a6a" stroke-width="0.85" stroke-linejoin="round" stroke-linecap="round" />
<path d="M720.1 608.5 C719.6 611.8 719.1 616.2 718.7 619.4" fill="none" stroke="#6a6a6a" stroke-width="0.85" stroke-linejoin="round" stroke-linecap="round" />
<path d="M712.7 678.3 C713.7 684.4 715.0 692.6 716.0 698.8" fill="none" stroke="#6a6a6a" stroke-width="0.85" stroke-linejoin="round" stroke-linecap="round" />
<path d="M709.1 615.3 C709.4 618.5 708.1 618.8 709.9 624.9 C711.8 631.0 710.3 631.4 714.6 633.7 C718.9 635.9 718.4 635.6 722.8 631.8 C727.2 627.9 727.3 628.6 727.7 622.2 C728.2 615.8 727.6 616.7 724.2 612.6 C720.7 608.5 719.6 610.8 717.3 609.9" fill="none" stroke="#6a6a6a" stroke-width="0.85" stroke-linejoin="round" stroke-linecap="round" />
<path d="M709.9 713.8 C711.9 710.6 711.2 709.1 716.0 704.3 C720.7 699.4 718.9 700.2 724.2 699.3 C729.4 698.4 728.9 699.0 731.8 701.5 C734.7 704.1 733.6 702.9 732.9 707.0 C732.2 711.1 730.7 711.6 729.6 713.8" fill="none" stroke="#6a6a6a" stroke-width="0.85" stroke-linejoin="round" stroke-linecap="round" />
<path d="M717.3 701.5 C720.2 700.7 724.0 699.6 726.9 698.8" fill="none" stroke="#6a6a6a" stroke-width="0.85" stroke-linejoin="round" stroke-linecap="round" />
<path d="M688 388.4 h5 M699 388.4 h5 M696 380.4 v5 M696 391.4 v5" stroke="#888" stroke-width="1" stroke-dasharray="2 1" fill="none"/><rect x="695.5" y="387.9" width="1" height="1" fill="#888"/>
  </g>
</svg>

<div id="right"></div>
<!-- swatches -->
<div class="abs" style="left:1123px;top:66px;width:34px;height:34px;box-sizing:border-box;border:1px solid #000;background:#fff;"><div style="position:absolute;left:1px;top:1px;right:1px;bottom:1px;background:#70bf9f"></div></div>
<div class="abs" style="left:1108px;top:50px;width:34px;height:34px;box-sizing:border-box;border:1px solid #000;background:#fff;"><div style="position:absolute;left:1px;top:1px;right:1px;bottom:1px;background:#000"></div></div>
<svg style="position:absolute;left:1146.8px;top:49px;width:15.6px;height:13.9px;fill:#eee;" viewBox="0 0 576 512"><path d="M118.6 41.4c-12.5-12.5-32.8-12.5-45.3 0l-64 64c-9.2 9.2-11.9 22.9-6.9 34.9S19.1 160 32 160h32v224c0 53 43 96 96 96h128c17.7 0 32-14.3 32-32s-14.3-32-32-32H160c-17.7 0-32-14.3-32-32V160h32c12.9 0 24.6-7.8 29.6-19.8s2.2-25.7-6.9-34.9l-64-64zm338.8 429.2c12.5 12.5 32.8 12.5 45.3 0l64-64c9.2-9.2 11.9-22.9 6.9-34.9S556.9 352 544 352h-32V128c0-53-43-96-96-96H288c-17.7 0-32 14.3-32 32s14.3 32 32 32h128c17.7 0 32 14.3 32 32v224h-32c-12.9 0-24.6 7.8-29.6 19.8s-2.2 25.7 6.9 34.9l64 64z"/></svg>
<!-- hex input -->
<div class="abs" style="left:1290px;top:50px;width:69px;height:35px;border-radius:3px;background:#fff;color:#495057;font-family:'Liberation Mono',monospace;font-size:14.5px;line-height:35.5px;text-align:center;">000000</div>
<!-- color wheel -->
<div class="abs" style="left:1131px;top:79px;width:206px;height:206px;background:conic-gradient(from 0deg at 103.2px 103px,#f00,#ff0,#0f0,#0ff,#00f,#f0f,#f00);-webkit-mask-image:radial-gradient(circle at 103.2px 103px,transparent 78.6px,#000 79.2px,#000 99.8px,transparent 100.4px);mask-image:radial-gradient(circle at 103.2px 103px,transparent 78.6px,#000 79.2px,#000 99.8px,transparent 100.4px);"></div>
<svg class="abs" style="left:1131px;top:79px;width:206px;height:206px" viewBox="0 0 206 206">
  <defs>
    
    <linearGradient id="svw" x1="0" x2="1" y1="0" y2="0"><stop offset="0" stop-color="#fff"/><stop offset="1" stop-color="#f00"/></linearGradient>
    <linearGradient id="svb" x1="0" x2="0" y1="0" y2="1"><stop offset="0" stop-color="#000" stop-opacity="0"/><stop offset="1" stop-color="#000"/></linearGradient>
  </defs>
  <circle cx="103.2" cy="103" r="101.5" fill="none" stroke="#f4f4f4" stroke-width="3"/>
  <circle cx="103.2" cy="103" r="77.5" fill="none" stroke="#f4f4f4" stroke-width="3"/>
  <circle cx="103.2" cy="103" r="100" fill="none" stroke="#555" stroke-opacity=".5" stroke-width=".6"/>
  <circle cx="103.2" cy="103" r="79" fill="none" stroke="#555" stroke-opacity=".5" stroke-width=".6"/>
  <!-- sv square -->
  <rect x="50" y="50" width="106.5" height="107" fill="#eee"/>
  <rect x="52.3" y="52.3" width="102" height="102.4" fill="#777"/>
  <rect x="53.5" y="53.5" width="99.6" height="100" fill="url(#svw)"/>
  <rect x="53.5" y="53.5" width="99.6" height="100" fill="url(#svb)"/>
  <!-- hue marker -->
  <circle cx="102.8" cy="12.9" r="5.2" fill="#f00" stroke="#fff" stroke-width="2.4"/>
  <circle cx="102.8" cy="12.9" r="6.6" fill="none" stroke="#333" stroke-opacity=".6" stroke-width=".6"/>
  <circle cx="102.8" cy="12.9" r="3.9" fill="none" stroke="#300" stroke-opacity=".9" stroke-width="1"/>
  <!-- sv marker -->
  <circle cx="53" cy="153" r="4.6" fill="none" stroke="#fff" stroke-width="2"/>
  <circle cx="53" cy="153" r="5.8" fill="none" stroke="#222" stroke-opacity=".7" stroke-width=".7"/>
  <circle cx="53" cy="153" r="3.5" fill="none" stroke="#222" stroke-opacity=".7" stroke-width=".7"/>
</svg>
<svg class="abs" style="left:1117px;top:261px;width:12px;height:17px" viewBox="1117 261 12 17"><path d="M1120.3 264.4 L1125.7 269.5 L1120.3 274.6" fill="none" stroke="#a6a6a6" stroke-width="3.1" stroke-linecap="round" stroke-linejoin="miter"/></svg>
<svg class="abs" style="left:1336.5px;top:264.2px;width:16px;height:16px;fill:#999" viewBox="-8 -8 16 16"><circle r="5.9"/><rect x="-2.1" y="-8" width="4.2" height="5" rx=".7" transform="rotate(0)"/><rect x="-2.1" y="-8" width="4.2" height="5" rx=".7" transform="rotate(60)"/><rect x="-2.1" y="-8" width="4.2" height="5" rx=".7" transform="rotate(120)"/><rect x="-2.1" y="-8" width="4.2" height="5" rx=".7" transform="rotate(180)"/><rect x="-2.1" y="-8" width="4.2" height="5" rx=".7" transform="rotate(240)"/><rect x="-2.1" y="-8" width="4.2" height="5" rx=".7" transform="rotate(300)"/><circle r="2.3" fill="#333" style="fill:#333"/></svg>

<div class="slot sel" style="left:1109px;"><svg style="position:absolute;left:7.5px;top:8px;width:20px;height:17.8px;fill:#222;" viewBox="0 0 576 512"><path d="M480.5 10.3 259.1 158c-29.1 19.4-47.6 50.9-50.6 85.3 62.3 12.8 111.4 61.9 124.3 124.3 34.5-3 65.9-21.5 85.3-50.6L565.7 95.5c6.7-10.1 10.3-21.9 10.3-34.1C576 27.5 548.5 0 514.6 0c-12.1 0-24 3.6-34.1 10.3M288 400c0-61.9-50.1-112-112-112S64 338.1 64 400c0 3.9.2 7.8.6 11.6 1.8 17.5-10.2 36.4-27.8 36.4H32c-17.7 0-32 14.3-32 32s14.3 32 32 32h144c61.9 0 112-50.1 112-112"/></svg><div class="badge">1</div></div>
<div class="slot" style="left:1152px;"><svg style="position:absolute;left:7.5px;top:8px;width:20px;height:17.8px;fill:#eee;" viewBox="0 0 576 512"><path d="M178.5 416h123l65.3-65.3-173.5-173.5L66.6 303.9l112 112zm45.5 64h-45.5c-17 0-33.3-6.7-45.3-18.7L17 345C6.1 334.1 0 319.4 0 304s6.1-30.1 17-41L263 17c10.9-10.9 25.6-17 41-17s30.1 6.1 41 17l182 182c10.9 10.9 17 25.6 17 41s-6.1 30.1-17 41L392 416h120c17.7 0 32 14.3 32 32s-14.3 32-32 32z"/></svg><div class="badge">2</div></div>
<div class="slot" style="left:1195px;"><svg style="position:absolute;left:6px;top:7px;width:22.5px;height:20px;fill:#eee;" viewBox="0 0 576 512"><path d="M309.7 71.6 245.3 136l33.4 33.4c12.5 12.5 12.5 32.8 0 45.3s-32.8 12.5-45.3 0L200 181.3l-96.4 96.4c-2.9 2.9-5.1 6.5-6.3 10.3h321.5l53.7-53.7c4.9-4.9 7.6-11.5 7.6-18.3s-2.7-13.5-7.6-18.3L346.3 71.6c-4.8-4.9-11.4-7.6-18.3-7.6s-13.5 2.7-18.3 7.6M58.3 232.4l96.4-96.4-49.4-49.4c-12.5-12.5-12.5-32.8 0-45.3s32.8-12.5 45.3 0L200 90.7l64.4-64.4C281.3 9.5 304.1 0 328 0s46.7 9.5 63.6 26.3l126.1 126.1c16.8 16.9 26.3 39.7 26.3 63.6s-9.5 46.7-26.3 63.6L311.6 485.7C294.7 502.5 271.9 512 248 512s-46.7-9.5-63.6-26.3L58.3 359.6C41.5 342.7 32 319.9 32 296s9.5-46.7 26.3-63.6M512 544c-35.3 0-64-28.7-64-64 0-25.2 32.6-79.6 51.2-108.7 6-9.4 19.5-9.4 25.5 0 18.7 29.1 51.2 83.5 51.2 108.7 0 35.3-28.7 64-64 64z"/></svg><div class="badge">3</div></div>
<div class="slot" style="left:1238px;"><svg class="abs" style="left:8.5px;top:8px;width:18px;height:18px" viewBox="0 0 512 512"><path fill-rule="evenodd" d="M512 128V32c0-17.67-14.33-32-32-32h-96c-17.67 0-32 14.33-32 32H160c0-17.67-14.33-32-32-32H32C14.33 0 0 14.33 0 32v96c0 17.67 14.33 32 32 32v192c-17.67 0-32 14.33-32 32v96c0 17.670 14.33 32 32 32h96c17.67 0 32-14.33 32-32h192c0 17.670 14.33 32 32 32h96c17.67 0 32-14.33 32-32v-96c0-17.670-14.33-32-32-32V160c17.670 0 32-14.33 32-32zm-96-64h32v32h-32V64zM64 64h32v32H64V64zm32 384H64v-32h32v32zm352 0h-32v-32h32v32zm-32-96h-32c-17.670 0-32 14.33-32 32v32H160v-32c0-17.670-14.33-32-32-32H96V160h32c17.670 0 32-14.33 32-32V96h192v32c0 17.670 14.330 32 32 32h32v192z"/></svg><div class="badge">4</div></div>
<div class="slot" style="left:1281px;"><svg class="abs" style="left:8.5px;top:8px;width:18px;height:18px" viewBox="0 0 512 512"><path d="M50.75 333.25c-12 12-18.75 28.28-18.75 45.260V424L0 480l32 32 56-32h45.490c16.970 0 33.250-6.740 45.250-18.740l126.640-126.620-128-128L50.750 333.250zM483.880 28.120c-37.470-37.500-98.280-37.500-135.750 0l-77.090 77.090-13.100-13.100c-9.440-9.440-24.650-9.310-33.940 0l-40.970 40.970c-9.370 9.370-9.370 24.570 0 33.940l161.940 161.940c9.440 9.440 24.650 9.310 33.940 0L419.880 288c9.370-9.370 9.370-24.570 0-33.940l-13.100-13.100 77.090-77.090c37.500-37.480 37.500-98.260.010-135.750z"/></svg><div class="badge">5</div></div>
<div class="slot" style="left:1324px;"><svg class="abs" style="left:8.5px;top:7.5px;width:18px;height:18px" viewBox="0 0 20 20">
  <path d="M0.4 0.8 L10.2 5.4 L6.1 6.4 L5.6 9.9Z"/>
  <path d="M8.2 8.7 C13 8.4 16 8.8 17.6 9.9 C20 11.4 19.6 13.4 16.5 14.6 C14 15.5 11.5 15.6 9.5 15.4 C6.5 15.2 3.6 14.9 1.9 13.9 C0 12.8 0.4 10.9 2.6 10.1" fill="none" stroke="#eee" stroke-width="1.5" stroke-linecap="round"/>
  <path d="M7.6 14 L11.4 14.4 L10.6 17 L8.4 16.8Z"/>
  <path d="M9.8 15.6 L19 19.5" stroke="#eee" stroke-width="1.6" stroke-linecap="round"/>
</svg><div class="badge">6</div></div>

<div class="lbl" style="top:333px;">size</div>
<div class="chk" style="left:1148px;top:334px;"></div>
<div class="chk" style="left:1170px;top:334px;"><svg class="abs" style="left:4.6px;top:4.4px;width:8.8px;height:9px" viewBox="0 0 8.8 9"><path d="M1 1 L7.8 8 M7.8 1 L1 8" stroke="#444" stroke-width="2.5" fill="none"/></svg></div>
<div class="sld" style="top:334px;"><span style="position:absolute;left:4.5px;">×1.0</span>2.0 px<div style="position:absolute;left:1px;top:1px;width:1px;height:16px;background:#999"></div></div>
<div class="lbl" style="top:356px;">min size</div>
<div class="sld" style="top:357px;">0%</div>
<div class="lbl" style="top:379px;">density</div>
<div class="chk" style="left:1170px;top:380px;"></div>
<div class="sld full" style="top:380px;">100%</div>
<div class="lbl" style="top:402px;">opacity</div>
<div class="sld full" style="top:403px;">100%</div>
<div class="lbl" style="top:425px;">hardness</div>
<div class="sld full" style="top:426px;">100%</div>
<div class="lbl" style="top:448px;">stabilizer</div>
<div class="sld" style="top:449px;">off</div>

<div class="abs" style="left:1109px;top:493px;width:250px;height:2px;background:#666;"></div>
<div class="lbl" style="top:498px;">opacity</div>
<div class="chk" style="left:1170px;top:499px;"></div>
<div class="sld full" style="top:499px;">100%</div>
<!-- row 2 -->
<div class="lb" style="left:1107.5px;top:522.3px;width:88px;text-align:center;padding-right:12px;"><span style="position:relative;left:1.5px">normal</span><svg style="position:absolute;left:63.5px;top:3.8px;width:6px;height:9.6px;fill:#eee;" viewBox="0 0 320 512"><path d="M140.3 376.8c12.6 10.2 31.1 9.5 42.8-2.2l128-128c9.2-9.2 11.9-22.9 6.9-34.9S301.4 192 288.5 192h-256c-12.9 0-24.6 7.8-29.6 19.8s-2.2 25.7 7 34.8l128 128z"/></svg></div>
<div class="lb" style="left:1200.5px;top:522.3px;width:57px;"><svg style="position:absolute;left:5.6px;top:3px;width:13.4px;height:13.4px;fill:#eee;" viewBox="0 0 512 512"><path d="M505 273c9.4-9.4 9.4-24.6 0-33.9L361 95c-6.9-6.9-17.2-8.9-26.2-5.2S320 102.3 320 112v80H208c-26.5 0-48 21.5-48 48v32c0 26.5 21.5 48 48 48h112v80c0 9.7 5.8 18.5 14.8 22.2s19.3 1.7 26.2-5.2zM160 96c17.7 0 32-14.3 32-32s-14.3-32-32-32H96C43 32 0 75 0 128v256c0 53 43 96 96 96h64c17.7 0 32-14.3 32-32s-14.3-32-32-32H96c-17.7 0-32-14.3-32-32V128c0-17.7 14.3-32 32-32z"/></svg><span style="position:absolute;left:21px;">leave</span></div>
<div class="lb" style="left:1285.5px;top:522.3px;width:28px;border-radius:3px 0 0 3px;"><svg style="position:absolute;left:5.6px;top:2.4px;width:13.8px;height:13.8px;fill:#eee;" viewBox="0 0 512 512"><path d="M288 448H64V224h48v-64H64c-35.3 0-64 28.7-64 64v224c0 35.3 28.7 64 64 64h224c35.3 0 64-28.7 64-64v-48h-64zm-64-96h224c35.3 0 64-28.7 64-64V64c0-35.3-28.7-64-64-64H224c-35.3 0-64 28.7-64 64v224c0 35.3 28.7 64 64 64"/></svg></div>
<div class="lb" style="left:1312.5px;top:522.3px;width:17px;border-radius:0 3px 3px 0;"><svg style="position:absolute;left:4.5px;top:3.8px;width:6px;height:9.6px;fill:#eee;" viewBox="0 0 320 512"><path d="M140.3 376.8c12.6 10.2 31.1 9.5 42.8-2.2l128-128c9.2-9.2 11.9-22.9 6.9-34.9S301.4 192 288.5 192h-256c-12.9 0-24.6 7.8-29.6 19.8s-2.2 25.7 7 34.8l128 128z"/></svg></div>
<div class="lb" style="left:1334px;top:522.3px;width:27.6px;"><svg class="abs" style="left:7.1px;top:3.5px;width:12.4px;height:12.2px" viewBox="0 0 12 12"><path fill-rule="evenodd" d="M1.2 0 H10.8 A1.2 1.2 0 0 1 12 1.2 V8 L8 12 H1.2 A1.2 1.2 0 0 1 0 10.8 V1.2 A1.2 1.2 0 0 1 1.2 0 Z M5.2 2.6 V5.2 H2.6 V6.8 H5.2 V9.4 H6.8 V6.8 H9.4 V5.2 H6.8 V2.6 Z"/><path d="M8 12 V8.6 A.6 .6 0 0 1 8.6 8 H12 Z" fill="#4a4a4a" stroke="#eee" stroke-width=".9"/></svg></div>
<!-- row 3 -->
<div class="lb" style="left:1107.5px;top:548.3px;width:27px;"><svg style="position:absolute;left:6.6px;top:2.4px;width:12px;height:13.8px;fill:#eee;" viewBox="0 0 384 512"><path d="M128 96v64h128V96c0-35.3-28.7-64-64-64s-64 28.7-64 64m-64 64V96c0-70.7 57.3-128 128-128S320 25.3 320 96v64c35.3 0 64 28.7 64 64v224c0 35.3-28.7 64-64 64H64c-35.3 0-64-28.7-64-64V224c0-35.3 28.7-64 64-64"/></svg></div>
<div class="lb" style="left:1138.5px;top:548.3px;width:27px;"><svg class="abs" style="left:7.6px;top:3px;width:10.4px;height:14px" viewBox="0 0 10 13.5"><path d="M3.1 0.3 H9.6 L8.2 2.5 H5.3 V8.6 H8.3 L4.2 13.3 L0.1 8.6 H3.1 Z"/></svg></div>
<div class="lb" style="left:1169.5px;top:548.3px;width:37px;"><svg class="abs" style="left:6.5px;top:8px;width:12px;height:3.2px" viewBox="0 0 12 3.2"><circle cx="1.6" cy="1.6" r="1.5"/><circle cx="6" cy="1.6" r="1.5"/><circle cx="10.4" cy="1.6" r="1.5"/></svg><svg style="position:absolute;left:24.5px;top:4.2px;width:6px;height:9.6px;fill:#eee;" viewBox="0 0 320 512"><path d="M140.3 376.8c12.6 10.2 31.1 9.5 42.8-2.2l128-128c9.2-9.2 11.9-22.9 6.9-34.9S301.4 192 288.5 192h-256c-12.9 0-24.6 7.8-29.6 19.8s-2.2 25.7 7 34.8l128 128z"/></svg></div>
<div class="lb" style="left:1210.5px;top:548.3px;width:33px;"><svg style="position:absolute;left:10.4px;top:2.6px;width:10.2px;height:13.6px;fill:#aaa;" viewBox="0 0 384 512"><path d="M0 64C0 28.7 28.7 0 64 0h149.5c17 0 33.3 6.7 45.3 18.7l106.5 106.6c12 12 18.7 28.3 18.7 45.3V448c0 35.3-28.7 64-64 64H64c-35.3 0-64-28.7-64-64zm208-5.5V152c0 13.3 10.7 24 24 24h93.5zm1 204.5c-9.4-9.4-24.6-9.4-33.9 0l-64 64c-9.4 9.4-9.4 24.6 0 33.9s24.6 9.4 33.9 0l23-23V424c0 13.3 10.7 24 24 24s24-10.7 24-24v-86.1l23 23c9.4 9.4 24.6 9.4 33.9 0s9.4-24.6 0-33.9l-64-64z"/></svg></div>
<div class="lb" style="left:1247.5px;top:548.3px;width:32px;"><svg style="position:absolute;left:10.3px;top:2.6px;width:10.2px;height:13.6px;fill:#eee;" viewBox="0 0 384 512"><path d="M0 64C0 28.7 28.7 0 64 0h149.5c17 0 33.3 6.7 45.3 18.7l106.5 106.6c12 12 18.7 28.3 18.7 45.3V448c0 35.3-28.7 64-64 64H64c-35.3 0-64-28.7-64-64zm208-5.5V152c0 13.3 10.7 24 24 24h93.5zM175 441c9.4 9.4 24.6 9.4 33.9 0l64-64c9.4-9.4 9.4-24.6 0-33.9s-24.6-9.4-33.9 0l-23 23V280c0-13.3-10.7-24-24-24s-24 10.7-24 24v86.1l-23-23c-9.4-9.4-24.6-9.4-33.9 0s-9.4 24.6 0 33.9l64 64z"/></svg></div>
<div class="lb" style="left:1284px;top:548.3px;width:28px;"><svg class="abs" style="left:6.3px;top:2.8px;width:13.6px;height:13.6px" viewBox="0 0 15 15"><circle cx="6.1" cy="6.1" r="4.9" fill="none" stroke="#eee" stroke-width="2.2"/><path d="M9.9 9.9 L13.7 13.7" stroke="#eee" stroke-width="2.5" stroke-linecap="round"/></svg></div>
<div class="lb" style="left:1334px;top:548.3px;width:27.6px;"><svg style="position:absolute;left:7px;top:2.4px;width:12px;height:13.8px;fill:#eee;" viewBox="0 0 448 512"><path d="M136.7 5.9 128 32H32C14.3 32 0 46.3 0 64s14.3 32 32 32h384c17.7 0 32-14.3 32-32s-14.3-32-32-32h-96l-8.7-26.1C306.9-7.2 294.7-16 280.9-16H167.1c-13.8 0-26 8.8-30.4 21.9M416 144H32l21.1 323.1C54.7 492.4 75.7 512 101 512h246c25.3 0 46.3-19.6 47.9-44.9z"/></svg></div>
<!-- layers -->
<div class="abs" style="left:1103px;top:575px;width:262px;height:192px;background:#e8e8e8;"></div>
<div class="stripe" style="top:575px;background:#e040fb;"></div>
<div class="row act" style="top:575px;">
  <svg style="position:absolute;left:5px;top:6.2px;width:15.4px;height:11.4px;fill:#222;" viewBox="0 0 576 512" preserveAspectRatio="none"><path d="M288 32c-80.8 0-145.5 36.8-192.6 80.6-46.8 43.5-78.1 95.4-93 131.1-3.3 7.9-3.3 16.7 0 24.6 14.9 35.7 46.2 87.7 93 131.1C142.5 443.1 207.2 480 288 480s145.5-36.8 192.6-80.6c46.8-43.5 78.1-95.4 93-131.1 3.3-7.9 3.3-16.7 0-24.6-14.9-35.7-46.2-87.7-93-131.1C433.5 68.9 368.8 32 288 32M144 256a144 144 0 1 1 288 0 144 144 0 1 1-288 0m144-64c0 35.3-28.7 64-64 64-11.5 0-22.3-3-31.7-8.4-1 10.9-.1 22.1 2.9 33.2 13.7 51.2 66.4 81.6 117.6 67.9s81.6-66.4 67.9-117.6c-12.2-45.7-55.5-74.8-101.1-70.8 5.3 9.3 8.4 20.1 8.4 31.7"/></svg>
  <svg style="position:absolute;left:6px;top:27px;width:13px;height:13px;fill:#222;" viewBox="0 0 512 512"><path d="M352.9 21.2 308 66.1 445.9 204l44.9-44.9c13.6-13.5 21.2-31.9 21.2-51.1s-7.6-37.6-21.2-51.1l-35.7-35.7C441.6 7.6 423.2 0 404 0s-37.6 7.6-51.1 21.2M274.1 100 58.9 315.1c-10.7 10.7-18.5 24.1-22.6 38.7L.9 481.6c-2.3 8.3 0 17.3 6.2 23.4s15.1 8.5 23.4 6.2l127.8-35.5c14.6-4.1 27.9-11.8 38.7-22.6l215-215.2z"/></svg>
  <div class="thumb"><div class="abs chk8" style="left:0;top:9px;width:40px;height:25px;"></div>
    <svg class="abs" style="left:0;top:0;width:40px;height:40px" viewBox="0 0 40 40"><path d="M3 12 L9 10 L12 14 L16 24 L13 30 L9 31 L6 24Z" fill="#4c9a82"/><ellipse cx="13.5" cy="24" rx="3.6" ry="6.5" transform="rotate(-18 13.5 24)" fill="#121222"/><path d="M8 28 l3 1 l-1 4z" fill="#3d8fe0"/></svg>
  </div>
  <div class="lname">Layer #3</div><div class="lsub">normal 100% | <b>Quadros</b></div>
</div>
<div class="stripe" style="top:622px;"></div>
<div class="row" style="top:622px;">
  <svg style="position:absolute;left:5px;top:6.2px;width:15.4px;height:11.4px;fill:#222;" viewBox="0 0 576 512" preserveAspectRatio="none"><path d="M288 32c-80.8 0-145.5 36.8-192.6 80.6-46.8 43.5-78.1 95.4-93 131.1-3.3 7.9-3.3 16.7 0 24.6 14.9 35.7 46.2 87.7 93 131.1C142.5 443.1 207.2 480 288 480s145.5-36.8 192.6-80.6c46.8-43.5 78.1-95.4 93-131.1 3.3-7.9 3.3-16.7 0-24.6-14.9-35.7-46.2-87.7-93-131.1C433.5 68.9 368.8 32 288 32M144 256a144 144 0 1 1 288 0 144 144 0 1 1-288 0m144-64c0 35.3-28.7 64-64 64-11.5 0-22.3-3-31.7-8.4-1 10.9-.1 22.1 2.9 33.2 13.7 51.2 66.4 81.6 117.6 67.9s81.6-66.4 67.9-117.6c-12.2-45.7-55.5-74.8-101.1-70.8 5.3 9.3 8.4 20.1 8.4 31.7"/></svg>
  <div class="thumb" style="top:3px"><div class="abs chk8" style="left:0;top:9px;width:40px;height:23px;"></div></div>
  <div class="lname">Layer #5</div><div class="lsub">normal 61% | <b>Quadros</b></div>
</div>
<div class="stripe" style="top:669px;"></div>
<div class="row" style="top:669px;">
  <svg style="position:absolute;left:5px;top:6.2px;width:15.4px;height:11.4px;fill:#222;" viewBox="0 0 576 512" preserveAspectRatio="none"><path d="M288 32c-80.8 0-145.5 36.8-192.6 80.6-46.8 43.5-78.1 95.4-93 131.1-3.3 7.9-3.3 16.7 0 24.6 14.9 35.7 46.2 87.7 93 131.1C142.5 443.1 207.2 480 288 480s145.5-36.8 192.6-80.6c46.8-43.5 78.1-95.4 93-131.1 3.3-7.9 3.3-16.7 0-24.6-14.9-35.7-46.2-87.7-93-131.1C433.5 68.9 368.8 32 288 32M144 256a144 144 0 1 1 288 0 144 144 0 1 1-288 0m144-64c0 35.3-28.7 64-64 64-11.5 0-22.3-3-31.7-8.4-1 10.9-.1 22.1 2.9 33.2 13.7 51.2 66.4 81.6 117.6 67.9s81.6-66.4 67.9-117.6c-12.2-45.7-55.5-74.8-101.1-70.8 5.3 9.3 8.4 20.1 8.4 31.7"/></svg>
  <div class="thumb" style="top:3px"><div class="abs chk8" style="left:0;top:9px;width:40px;height:23px;"></div></div>
  <div class="lname">Layer #4</div><div class="lsub">normal 52% | <b>Quadros</b></div>
</div>
<div class="stripe" style="top:716px;"></div>
<div class="row" style="top:716px;">
  <svg style="position:absolute;left:5px;top:6.2px;width:15.4px;height:11.4px;fill:#222;" viewBox="0 0 576 512" preserveAspectRatio="none"><path d="M288 32c-80.8 0-145.5 36.8-192.6 80.6-46.8 43.5-78.1 95.4-93 131.1-3.3 7.9-3.3 16.7 0 24.6 14.9 35.7 46.2 87.7 93 131.1C142.5 443.1 207.2 480 288 480s145.5-36.8 192.6-80.6c46.8-43.5 78.1-95.4 93-131.1 3.3-7.9 3.3-16.7 0-24.6-14.9-35.7-46.2-87.7-93-131.1C433.5 68.9 368.8 32 288 32M144 256a144 144 0 1 1 288 0 144 144 0 1 1-288 0m144-64c0 35.3-28.7 64-64 64-11.5 0-22.3-3-31.7-8.4-1 10.9-.1 22.1 2.9 33.2 13.7 51.2 66.4 81.6 117.6 67.9s81.6-66.4 67.9-117.6c-12.2-45.7-55.5-74.8-101.1-70.8 5.3 9.3 8.4 20.1 8.4 31.7"/></svg>
  <div class="thumb" style="top:3px"><div class="abs chk8" style="left:4px;top:1px;width:33px;height:39px;"></div>
   <svg class="abs" style="left:0;top:0;width:40px;height:40px" viewBox="0 0 40 40"><rect x="5" y="2" width="10" height="8" fill="#2a8f8a"/><rect x="16" y="3" width="13" height="7" fill="#30c9c0" opacity=".8"/><rect x="7" y="4" width="5" height="4" fill="#223"/><rect x="18" y="4" width="4" height="4" fill="#223" opacity=".7"/></svg>
  </div>
  <div class="lname">Layer #1</div><div class="lsub">normal 100% | <b>Quadros</b></div>
</div>
<div class="stripe" style="top:763px;height:4px;"></div>
<div class="row" style="top:763px;height:4px;border:0;"></div>

</div></body></html>
